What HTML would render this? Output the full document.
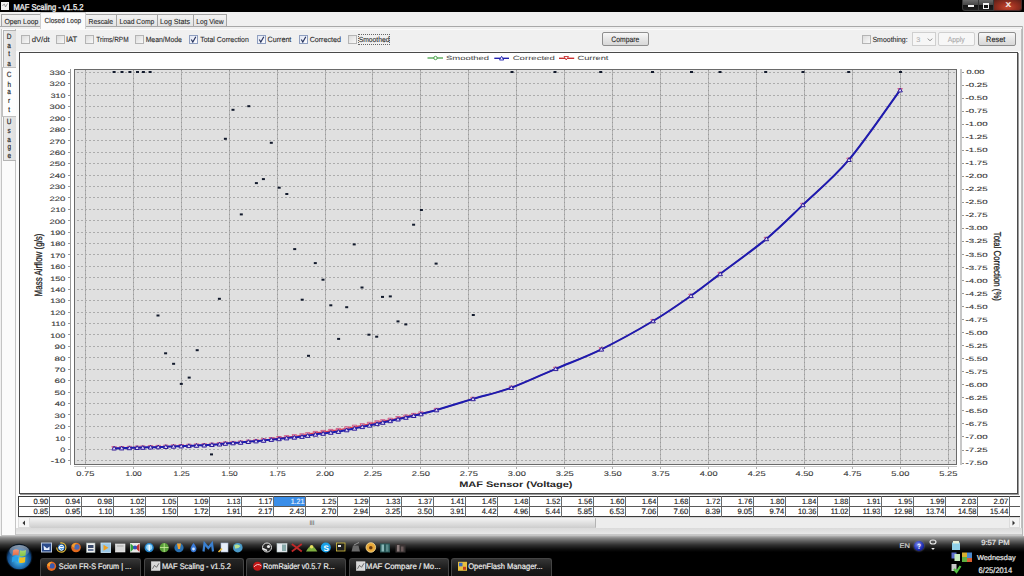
<!DOCTYPE html><html><head><meta charset="utf-8"><style>
*{margin:0;padding:0;box-sizing:border-box}
html,body{width:1024px;height:576px;overflow:hidden;background:#f0f0f0;font-family:"Liberation Sans",sans-serif}
.abs{position:absolute}
svg text{font-family:"Liberation Sans",sans-serif;text-rendering:geometricPrecision}

</style></head><body>
<div class="abs" style="left:0px;top:0px;width:1024px;height:12px;background:#000"></div>
<div class="abs" style="left:1px;top:2px;width:8px;height:7.5px;background:#f4f4f4"></div>
<div class="abs" style="left:962px;top:0px;width:17px;height:11px;background:linear-gradient(#6a6a6a 0,#4a4a4a 45%,#141414 55%,#1e1e1e 100%);border:1px solid #3a3a3a;border-top:0;border-radius:0 0 0 3px"></div>
<div class="abs" style="left:968px;top:5px;width:6px;height:2px;background:#f4f4f4"></div>
<div class="abs" style="left:979px;top:0px;width:15px;height:11px;background:linear-gradient(#6a6a6a 0,#4a4a4a 45%,#141414 55%,#1e1e1e 100%);border:1px solid #3a3a3a;border-top:0;border-left:0"></div>
<div class="abs" style="left:983px;top:3px;width:6px;height:6px;border:1px solid #f4f4f4;border-top-width:2px"></div>
<div class="abs" style="left:994px;top:0px;width:28px;height:11px;background:radial-gradient(ellipse at 50% 70%,#c84a30 0,#9a3020 45%,#5a2018 100%);border:1px solid #4a2a2a;border-top:0;border-left:0;border-radius:0 0 3px 0"></div>
<div class="abs" style="left:0px;top:12px;width:1024px;height:524px;background:#f0f0f0"></div>
<div class="abs" style="left:1px;top:29px;width:1022px;height:507px;border:1px solid #c4c4c4;background:#fbfbfb"></div>
<div class="abs" style="left:1px;top:14px;width:41px;height:13px;background:linear-gradient(#f2f2f2,#e4e4e4);border:1px solid #a4a4a4"></div>
<div class="abs" style="left:85px;top:14px;width:33px;height:13px;background:linear-gradient(#f2f2f2,#e4e4e4);border:1px solid #a4a4a4"></div>
<div class="abs" style="left:116px;top:14px;width:43px;height:13px;background:linear-gradient(#f2f2f2,#e4e4e4);border:1px solid #a4a4a4"></div>
<div class="abs" style="left:157px;top:14px;width:38px;height:13px;background:linear-gradient(#f2f2f2,#e4e4e4);border:1px solid #a4a4a4"></div>
<div class="abs" style="left:193px;top:14px;width:34px;height:13px;background:linear-gradient(#f2f2f2,#e4e4e4);border:1px solid #a4a4a4"></div>
<div class="abs" style="left:0px;top:26px;width:1023px;height:1px;background:#a8a8a8"></div>
<div class="abs" style="left:1022px;top:26px;width:1px;height:510px;background:#b8b8b8"></div>
<div class="abs" style="left:40px;top:12px;width:46px;height:18px;background:#fbfbfb;border:1px solid #cfcfcf;border-bottom:0"></div>
<div class="abs" style="left:2px;top:29px;width:1020px;height:506px;background:#fbfbfb"></div>
<div class="abs" style="left:15px;top:29px;width:1px;height:507px;background:#c4c4c4"></div>
<div class="abs" style="left:3px;top:30px;width:13px;height:38px;background:linear-gradient(90deg,#ececec,#dedede);border:1px solid #b4b4b4;border-right:0"></div>
<div class="abs" style="left:3px;top:116px;width:13px;height:45px;background:linear-gradient(90deg,#ececec,#dedede);border:1px solid #b4b4b4;border-right:0"></div>
<div class="abs" style="left:2px;top:67px;width:14px;height:50px;background:#fdfdfd;border:1px solid #c0c0c0;border-right:0"></div>
<div class="abs" style="left:16px;top:30px;width:1005px;height:21px;background:#f0f0f0"></div>
<div class="abs" style="left:21px;top:35px;width:9px;height:9px;border:1px solid #b4b4b4;background:linear-gradient(135deg,#dcdcdc,#f8f8f8)"></div>
<div class="abs" style="left:56px;top:35px;width:9px;height:9px;border:1px solid #b4b4b4;background:linear-gradient(135deg,#dcdcdc,#f8f8f8)"></div>
<div class="abs" style="left:85px;top:35px;width:9px;height:9px;border:1px solid #b4b4b4;background:linear-gradient(135deg,#dcdcdc,#f8f8f8)"></div>
<div class="abs" style="left:135px;top:35px;width:9px;height:9px;border:1px solid #b4b4b4;background:linear-gradient(135deg,#dcdcdc,#f8f8f8)"></div>
<div class="abs" style="left:189px;top:35px;width:9px;height:9px;border:1px solid #8f9fc0;background:linear-gradient(135deg,#e4e8f4,#fafbfe)"></div>
<div class="abs" style="left:257px;top:35px;width:9px;height:9px;border:1px solid #8f9fc0;background:linear-gradient(135deg,#e4e8f4,#fafbfe)"></div>
<div class="abs" style="left:299px;top:35px;width:9px;height:9px;border:1px solid #8f9fc0;background:linear-gradient(135deg,#e4e8f4,#fafbfe)"></div>
<div class="abs" style="left:348px;top:35px;width:9px;height:9px;border:1px solid #b4b4b4;background:linear-gradient(135deg,#dcdcdc,#f8f8f8)"></div>
<div class="abs" style="left:358px;top:34px;width:32px;height:11px;border:1px dotted #666"></div>
<div class="abs" style="left:602px;top:32px;width:47px;height:14px;border:1px solid #8e8e8e;border-radius:2px;background:linear-gradient(#f8f8f8,#e6e6e6 50%,#d8d8d8)"></div>
<div class="abs" style="left:862px;top:35px;width:9px;height:9px;border:1px solid #b4b4b4;background:linear-gradient(135deg,#dcdcdc,#f8f8f8)"></div>
<div class="abs" style="left:912px;top:32px;width:24px;height:14px;border:1px solid #cfcfcf;background:#f6f6f6"></div>
<div class="abs" style="left:938px;top:32px;width:37px;height:14px;border:1px solid #cfcfcf;background:#f7f7f7;border-radius:2px"></div>
<div class="abs" style="left:978px;top:32px;width:38px;height:14px;border:1px solid #8e8e8e;border-radius:2px;background:linear-gradient(#f8f8f8,#e6e6e6 50%,#d8d8d8)"></div>
<div class="abs" style="left:19px;top:52px;width:999px;height:442px;border:1px solid #4a4a4a;background:#fff;box-shadow:1px 1px 0 #9a9a9a"></div>
<div class="abs" style="left:1021px;top:29px;width:1px;height:507px;background:#c0c0c0"></div>
<svg class="abs" style="left:0;top:0" width="1024" height="576">
<rect x="74.5" y="69.5" width="882" height="395" fill="#e0e0e0" stroke="#6a6a6a" stroke-width="1"/>
<line x1="85.5" y1="70" x2="85.5" y2="464" stroke="#b2b2b2" stroke-width="1"/>
<line x1="85.5" y1="70" x2="85.5" y2="464" stroke="#999" stroke-width="1" stroke-dasharray="1,3"/>
<line x1="133.5" y1="70" x2="133.5" y2="464" stroke="#b2b2b2" stroke-width="1"/>
<line x1="133.5" y1="70" x2="133.5" y2="464" stroke="#999" stroke-width="1" stroke-dasharray="1,3"/>
<line x1="181.5" y1="70" x2="181.5" y2="464" stroke="#b2b2b2" stroke-width="1"/>
<line x1="181.5" y1="70" x2="181.5" y2="464" stroke="#999" stroke-width="1" stroke-dasharray="1,3"/>
<line x1="229.5" y1="70" x2="229.5" y2="464" stroke="#b2b2b2" stroke-width="1"/>
<line x1="229.5" y1="70" x2="229.5" y2="464" stroke="#999" stroke-width="1" stroke-dasharray="1,3"/>
<line x1="277.5" y1="70" x2="277.5" y2="464" stroke="#b2b2b2" stroke-width="1"/>
<line x1="277.5" y1="70" x2="277.5" y2="464" stroke="#999" stroke-width="1" stroke-dasharray="1,3"/>
<line x1="325.5" y1="70" x2="325.5" y2="464" stroke="#b2b2b2" stroke-width="1"/>
<line x1="325.5" y1="70" x2="325.5" y2="464" stroke="#999" stroke-width="1" stroke-dasharray="1,3"/>
<line x1="372.5" y1="70" x2="372.5" y2="464" stroke="#b2b2b2" stroke-width="1"/>
<line x1="372.5" y1="70" x2="372.5" y2="464" stroke="#999" stroke-width="1" stroke-dasharray="1,3"/>
<line x1="420.5" y1="70" x2="420.5" y2="464" stroke="#b2b2b2" stroke-width="1"/>
<line x1="420.5" y1="70" x2="420.5" y2="464" stroke="#999" stroke-width="1" stroke-dasharray="1,3"/>
<line x1="468.5" y1="70" x2="468.5" y2="464" stroke="#b2b2b2" stroke-width="1"/>
<line x1="468.5" y1="70" x2="468.5" y2="464" stroke="#999" stroke-width="1" stroke-dasharray="1,3"/>
<line x1="516.5" y1="70" x2="516.5" y2="464" stroke="#b2b2b2" stroke-width="1"/>
<line x1="516.5" y1="70" x2="516.5" y2="464" stroke="#999" stroke-width="1" stroke-dasharray="1,3"/>
<line x1="564.5" y1="70" x2="564.5" y2="464" stroke="#b2b2b2" stroke-width="1"/>
<line x1="564.5" y1="70" x2="564.5" y2="464" stroke="#999" stroke-width="1" stroke-dasharray="1,3"/>
<line x1="612.5" y1="70" x2="612.5" y2="464" stroke="#b2b2b2" stroke-width="1"/>
<line x1="612.5" y1="70" x2="612.5" y2="464" stroke="#999" stroke-width="1" stroke-dasharray="1,3"/>
<line x1="660.5" y1="70" x2="660.5" y2="464" stroke="#b2b2b2" stroke-width="1"/>
<line x1="660.5" y1="70" x2="660.5" y2="464" stroke="#999" stroke-width="1" stroke-dasharray="1,3"/>
<line x1="708.5" y1="70" x2="708.5" y2="464" stroke="#b2b2b2" stroke-width="1"/>
<line x1="708.5" y1="70" x2="708.5" y2="464" stroke="#999" stroke-width="1" stroke-dasharray="1,3"/>
<line x1="756.5" y1="70" x2="756.5" y2="464" stroke="#b2b2b2" stroke-width="1"/>
<line x1="756.5" y1="70" x2="756.5" y2="464" stroke="#999" stroke-width="1" stroke-dasharray="1,3"/>
<line x1="804.5" y1="70" x2="804.5" y2="464" stroke="#b2b2b2" stroke-width="1"/>
<line x1="804.5" y1="70" x2="804.5" y2="464" stroke="#999" stroke-width="1" stroke-dasharray="1,3"/>
<line x1="852.5" y1="70" x2="852.5" y2="464" stroke="#b2b2b2" stroke-width="1"/>
<line x1="852.5" y1="70" x2="852.5" y2="464" stroke="#999" stroke-width="1" stroke-dasharray="1,3"/>
<line x1="900.5" y1="70" x2="900.5" y2="464" stroke="#b2b2b2" stroke-width="1"/>
<line x1="900.5" y1="70" x2="900.5" y2="464" stroke="#999" stroke-width="1" stroke-dasharray="1,3"/>
<line x1="948.5" y1="70" x2="948.5" y2="464" stroke="#b2b2b2" stroke-width="1"/>
<line x1="948.5" y1="70" x2="948.5" y2="464" stroke="#999" stroke-width="1" stroke-dasharray="1,3"/>
<line x1="75" y1="460.5" x2="956" y2="460.5" stroke="#acacac" stroke-width="1" stroke-dasharray="2,2" stroke-dashoffset="2"/>
<line x1="75" y1="449.5" x2="956" y2="449.5" stroke="#acacac" stroke-width="1" stroke-dasharray="2,2" stroke-dashoffset="2"/>
<line x1="75" y1="437.5" x2="956" y2="437.5" stroke="#acacac" stroke-width="1" stroke-dasharray="2,2" stroke-dashoffset="2"/>
<line x1="75" y1="426.5" x2="956" y2="426.5" stroke="#acacac" stroke-width="1" stroke-dasharray="2,2" stroke-dashoffset="2"/>
<line x1="75" y1="414.5" x2="956" y2="414.5" stroke="#acacac" stroke-width="1" stroke-dasharray="2,2" stroke-dashoffset="2"/>
<line x1="75" y1="403.5" x2="956" y2="403.5" stroke="#acacac" stroke-width="1" stroke-dasharray="2,2" stroke-dashoffset="2"/>
<line x1="75" y1="392.5" x2="956" y2="392.5" stroke="#acacac" stroke-width="1" stroke-dasharray="2,2" stroke-dashoffset="2"/>
<line x1="75" y1="380.5" x2="956" y2="380.5" stroke="#acacac" stroke-width="1" stroke-dasharray="2,2" stroke-dashoffset="2"/>
<line x1="75" y1="369.5" x2="956" y2="369.5" stroke="#acacac" stroke-width="1" stroke-dasharray="2,2" stroke-dashoffset="2"/>
<line x1="75" y1="357.5" x2="956" y2="357.5" stroke="#acacac" stroke-width="1" stroke-dasharray="2,2" stroke-dashoffset="2"/>
<line x1="75" y1="346.5" x2="956" y2="346.5" stroke="#acacac" stroke-width="1" stroke-dasharray="2,2" stroke-dashoffset="2"/>
<line x1="75" y1="334.5" x2="956" y2="334.5" stroke="#acacac" stroke-width="1" stroke-dasharray="2,2" stroke-dashoffset="2"/>
<line x1="75" y1="323.5" x2="956" y2="323.5" stroke="#acacac" stroke-width="1" stroke-dasharray="2,2" stroke-dashoffset="2"/>
<line x1="75" y1="312.5" x2="956" y2="312.5" stroke="#acacac" stroke-width="1" stroke-dasharray="2,2" stroke-dashoffset="2"/>
<line x1="75" y1="300.5" x2="956" y2="300.5" stroke="#acacac" stroke-width="1" stroke-dasharray="2,2" stroke-dashoffset="2"/>
<line x1="75" y1="289.5" x2="956" y2="289.5" stroke="#acacac" stroke-width="1" stroke-dasharray="2,2" stroke-dashoffset="2"/>
<line x1="75" y1="277.5" x2="956" y2="277.5" stroke="#acacac" stroke-width="1" stroke-dasharray="2,2" stroke-dashoffset="2"/>
<line x1="75" y1="266.5" x2="956" y2="266.5" stroke="#acacac" stroke-width="1" stroke-dasharray="2,2" stroke-dashoffset="2"/>
<line x1="75" y1="254.5" x2="956" y2="254.5" stroke="#acacac" stroke-width="1" stroke-dasharray="2,2" stroke-dashoffset="2"/>
<line x1="75" y1="243.5" x2="956" y2="243.5" stroke="#acacac" stroke-width="1" stroke-dasharray="2,2" stroke-dashoffset="2"/>
<line x1="75" y1="232.5" x2="956" y2="232.5" stroke="#acacac" stroke-width="1" stroke-dasharray="2,2" stroke-dashoffset="2"/>
<line x1="75" y1="220.5" x2="956" y2="220.5" stroke="#acacac" stroke-width="1" stroke-dasharray="2,2" stroke-dashoffset="2"/>
<line x1="75" y1="209.5" x2="956" y2="209.5" stroke="#acacac" stroke-width="1" stroke-dasharray="2,2" stroke-dashoffset="2"/>
<line x1="75" y1="197.5" x2="956" y2="197.5" stroke="#acacac" stroke-width="1" stroke-dasharray="2,2" stroke-dashoffset="2"/>
<line x1="75" y1="186.5" x2="956" y2="186.5" stroke="#acacac" stroke-width="1" stroke-dasharray="2,2" stroke-dashoffset="2"/>
<line x1="75" y1="175.5" x2="956" y2="175.5" stroke="#acacac" stroke-width="1" stroke-dasharray="2,2" stroke-dashoffset="2"/>
<line x1="75" y1="163.5" x2="956" y2="163.5" stroke="#acacac" stroke-width="1" stroke-dasharray="2,2" stroke-dashoffset="2"/>
<line x1="75" y1="152.5" x2="956" y2="152.5" stroke="#acacac" stroke-width="1" stroke-dasharray="2,2" stroke-dashoffset="2"/>
<line x1="75" y1="140.5" x2="956" y2="140.5" stroke="#acacac" stroke-width="1" stroke-dasharray="2,2" stroke-dashoffset="2"/>
<line x1="75" y1="129.5" x2="956" y2="129.5" stroke="#acacac" stroke-width="1" stroke-dasharray="2,2" stroke-dashoffset="2"/>
<line x1="75" y1="117.5" x2="956" y2="117.5" stroke="#acacac" stroke-width="1" stroke-dasharray="2,2" stroke-dashoffset="2"/>
<line x1="75" y1="106.5" x2="956" y2="106.5" stroke="#acacac" stroke-width="1" stroke-dasharray="2,2" stroke-dashoffset="2"/>
<line x1="75" y1="95.5" x2="956" y2="95.5" stroke="#acacac" stroke-width="1" stroke-dasharray="2,2" stroke-dashoffset="2"/>
<line x1="75" y1="83.5" x2="956" y2="83.5" stroke="#acacac" stroke-width="1" stroke-dasharray="2,2" stroke-dashoffset="2"/>
<line x1="75" y1="72.5" x2="956" y2="72.5" stroke="#acacac" stroke-width="1" stroke-dasharray="2,2" stroke-dashoffset="2"/>
<line x1="70.5" y1="69" x2="70.5" y2="465" stroke="#999"/>
<line x1="68" y1="460.5" x2="70" y2="460.5" stroke="#999"/>
<line x1="68" y1="449.5" x2="70" y2="449.5" stroke="#999"/>
<line x1="68" y1="437.5" x2="70" y2="437.5" stroke="#999"/>
<line x1="68" y1="426.5" x2="70" y2="426.5" stroke="#999"/>
<line x1="68" y1="414.5" x2="70" y2="414.5" stroke="#999"/>
<line x1="68" y1="403.5" x2="70" y2="403.5" stroke="#999"/>
<line x1="68" y1="392.5" x2="70" y2="392.5" stroke="#999"/>
<line x1="68" y1="380.5" x2="70" y2="380.5" stroke="#999"/>
<line x1="68" y1="369.5" x2="70" y2="369.5" stroke="#999"/>
<line x1="68" y1="357.5" x2="70" y2="357.5" stroke="#999"/>
<line x1="68" y1="346.5" x2="70" y2="346.5" stroke="#999"/>
<line x1="68" y1="334.5" x2="70" y2="334.5" stroke="#999"/>
<line x1="68" y1="323.5" x2="70" y2="323.5" stroke="#999"/>
<line x1="68" y1="312.5" x2="70" y2="312.5" stroke="#999"/>
<line x1="68" y1="300.5" x2="70" y2="300.5" stroke="#999"/>
<line x1="68" y1="289.5" x2="70" y2="289.5" stroke="#999"/>
<line x1="68" y1="277.5" x2="70" y2="277.5" stroke="#999"/>
<line x1="68" y1="266.5" x2="70" y2="266.5" stroke="#999"/>
<line x1="68" y1="254.5" x2="70" y2="254.5" stroke="#999"/>
<line x1="68" y1="243.5" x2="70" y2="243.5" stroke="#999"/>
<line x1="68" y1="232.5" x2="70" y2="232.5" stroke="#999"/>
<line x1="68" y1="220.5" x2="70" y2="220.5" stroke="#999"/>
<line x1="68" y1="209.5" x2="70" y2="209.5" stroke="#999"/>
<line x1="68" y1="197.5" x2="70" y2="197.5" stroke="#999"/>
<line x1="68" y1="186.5" x2="70" y2="186.5" stroke="#999"/>
<line x1="68" y1="175.5" x2="70" y2="175.5" stroke="#999"/>
<line x1="68" y1="163.5" x2="70" y2="163.5" stroke="#999"/>
<line x1="68" y1="152.5" x2="70" y2="152.5" stroke="#999"/>
<line x1="68" y1="140.5" x2="70" y2="140.5" stroke="#999"/>
<line x1="68" y1="129.5" x2="70" y2="129.5" stroke="#999"/>
<line x1="68" y1="117.5" x2="70" y2="117.5" stroke="#999"/>
<line x1="68" y1="106.5" x2="70" y2="106.5" stroke="#999"/>
<line x1="68" y1="95.5" x2="70" y2="95.5" stroke="#999"/>
<line x1="68" y1="83.5" x2="70" y2="83.5" stroke="#999"/>
<line x1="68" y1="72.5" x2="70" y2="72.5" stroke="#999"/>
<line x1="961" y1="69" x2="961" y2="465" stroke="#b4b4b4" stroke-width="1.5"/>
<line x1="962" y1="72.5" x2="964" y2="72.5" stroke="#999"/>
<line x1="962" y1="85.5" x2="964" y2="85.5" stroke="#999"/>
<line x1="962" y1="98.5" x2="964" y2="98.5" stroke="#999"/>
<line x1="962" y1="111.5" x2="964" y2="111.5" stroke="#999"/>
<line x1="962" y1="124.5" x2="964" y2="124.5" stroke="#999"/>
<line x1="962" y1="137.5" x2="964" y2="137.5" stroke="#999"/>
<line x1="962" y1="150.5" x2="964" y2="150.5" stroke="#999"/>
<line x1="962" y1="163.5" x2="964" y2="163.5" stroke="#999"/>
<line x1="962" y1="176.5" x2="964" y2="176.5" stroke="#999"/>
<line x1="962" y1="189.5" x2="964" y2="189.5" stroke="#999"/>
<line x1="962" y1="202.5" x2="964" y2="202.5" stroke="#999"/>
<line x1="962" y1="215.5" x2="964" y2="215.5" stroke="#999"/>
<line x1="962" y1="228.5" x2="964" y2="228.5" stroke="#999"/>
<line x1="962" y1="241.5" x2="964" y2="241.5" stroke="#999"/>
<line x1="962" y1="254.5" x2="964" y2="254.5" stroke="#999"/>
<line x1="962" y1="267.5" x2="964" y2="267.5" stroke="#999"/>
<line x1="962" y1="280.5" x2="964" y2="280.5" stroke="#999"/>
<line x1="962" y1="293.5" x2="964" y2="293.5" stroke="#999"/>
<line x1="962" y1="306.5" x2="964" y2="306.5" stroke="#999"/>
<line x1="962" y1="319.5" x2="964" y2="319.5" stroke="#999"/>
<line x1="962" y1="332.5" x2="964" y2="332.5" stroke="#999"/>
<line x1="962" y1="345.5" x2="964" y2="345.5" stroke="#999"/>
<line x1="962" y1="358.5" x2="964" y2="358.5" stroke="#999"/>
<line x1="962" y1="371.5" x2="964" y2="371.5" stroke="#999"/>
<line x1="962" y1="384.5" x2="964" y2="384.5" stroke="#999"/>
<line x1="962" y1="397.5" x2="964" y2="397.5" stroke="#999"/>
<line x1="962" y1="410.5" x2="964" y2="410.5" stroke="#999"/>
<line x1="962" y1="423.5" x2="964" y2="423.5" stroke="#999"/>
<line x1="962" y1="436.5" x2="964" y2="436.5" stroke="#999"/>
<line x1="962" y1="450.5" x2="964" y2="450.5" stroke="#999"/>
<line x1="962" y1="463.5" x2="964" y2="463.5" stroke="#999"/>
<line x1="74" y1="466.5" x2="957" y2="466.5" stroke="#c8c8c8"/>
<line x1="85.5" y1="467" x2="85.5" y2="469" stroke="#b0b0b0"/>
<line x1="133.5" y1="467" x2="133.5" y2="469" stroke="#b0b0b0"/>
<line x1="181.5" y1="467" x2="181.5" y2="469" stroke="#b0b0b0"/>
<line x1="229.5" y1="467" x2="229.5" y2="469" stroke="#b0b0b0"/>
<line x1="277.5" y1="467" x2="277.5" y2="469" stroke="#b0b0b0"/>
<line x1="325.5" y1="467" x2="325.5" y2="469" stroke="#b0b0b0"/>
<line x1="372.5" y1="467" x2="372.5" y2="469" stroke="#b0b0b0"/>
<line x1="420.5" y1="467" x2="420.5" y2="469" stroke="#b0b0b0"/>
<line x1="468.5" y1="467" x2="468.5" y2="469" stroke="#b0b0b0"/>
<line x1="516.5" y1="467" x2="516.5" y2="469" stroke="#b0b0b0"/>
<line x1="564.5" y1="467" x2="564.5" y2="469" stroke="#b0b0b0"/>
<line x1="612.5" y1="467" x2="612.5" y2="469" stroke="#b0b0b0"/>
<line x1="660.5" y1="467" x2="660.5" y2="469" stroke="#b0b0b0"/>
<line x1="708.5" y1="467" x2="708.5" y2="469" stroke="#b0b0b0"/>
<line x1="756.5" y1="467" x2="756.5" y2="469" stroke="#b0b0b0"/>
<line x1="804.5" y1="467" x2="804.5" y2="469" stroke="#b0b0b0"/>
<line x1="852.5" y1="467" x2="852.5" y2="469" stroke="#b0b0b0"/>
<line x1="900.5" y1="467" x2="900.5" y2="469" stroke="#b0b0b0"/>
<line x1="948.5" y1="467" x2="948.5" y2="469" stroke="#b0b0b0"/>
<line x1="427.5" y1="58" x2="443" y2="58" stroke="#3c9a3c" stroke-width="1.2"/><circle cx="435.5" cy="58" r="1.7" fill="#fff" stroke="#3c9a3c" stroke-width="0.9"/>
<line x1="494.3" y1="58.3" x2="509" y2="58.3" stroke="#2020b0" stroke-width="1.4"/><path d="M499.5,60 L501.6,56.3 L503.7,60 Z" fill="#fff" stroke="#2020b0" stroke-width="0.9"/>
<line x1="559" y1="58.3" x2="574.2" y2="58.3" stroke="#c83030" stroke-width="1.4"/><path d="M564,56.5 L568.5,56.5 L566.2,60 Z" fill="#fff" stroke="#c83030" stroke-width="0.9"/>
<path d="M114.06,448.23 C115.34,448.21 119.18,448.16 121.73,448.11 C124.29,448.07 126.85,448.02 129.40,447.94 C131.96,447.87 134.84,447.73 137.08,447.66 C139.31,447.58 140.59,447.56 142.83,447.49 C145.07,447.42 147.94,447.31 150.50,447.24 C153.06,447.16 155.61,447.10 158.17,447.02 C160.73,446.93 163.28,446.82 165.84,446.72 C168.40,446.62 170.95,446.52 173.51,446.42 C176.07,446.32 178.62,446.21 181.18,446.12 C183.74,446.02 186.29,445.95 188.85,445.84 C191.41,445.74 193.96,445.59 196.52,445.49 C199.08,445.38 201.63,445.33 204.19,445.20 C206.75,445.08 209.30,444.91 211.86,444.73 C214.42,444.56 217.29,444.35 219.53,444.15 C221.77,443.95 223.05,443.73 225.28,443.53 C227.52,443.34 230.40,443.15 232.96,442.99 C235.51,442.82 238.07,442.72 240.63,442.52 C243.18,442.31 245.74,442.00 248.30,441.74 C250.85,441.48 253.41,441.24 255.97,440.98 C258.52,440.71 261.08,440.48 263.64,440.16 C266.19,439.84 268.75,439.40 271.31,439.06 C273.86,438.72 276.42,438.44 278.98,438.12 C281.53,437.81 284.09,437.47 286.65,437.16 C289.20,436.86 291.76,436.59 294.32,436.29 C296.88,436.00 299.75,435.74 301.99,435.40 C304.23,435.06 305.50,434.67 307.74,434.27 C309.98,433.86 312.86,433.34 315.41,432.96 C317.97,432.58 320.53,432.34 323.08,432.01 C325.64,431.68 328.20,431.33 330.75,430.99 C333.31,430.65 335.77,430.41 338.42,429.97 C341.08,429.53 344.02,428.88 346.70,428.36 C349.38,427.83 351.90,427.34 354.50,426.83 C357.10,426.32 359.80,425.79 362.30,425.30 C364.80,424.81 367.05,424.37 369.50,423.89 C371.95,423.40 374.78,422.84 377.00,422.40 C379.22,421.96 380.60,421.69 382.80,421.25 C385.00,420.81 387.67,420.28 390.20,419.77 C392.73,419.27 395.38,418.73 398.00,418.20 C400.62,417.68 403.28,417.13 405.90,416.60 C408.52,416.07 411.20,415.52 413.70,415.00 C416.20,414.48 417.10,414.35 420.90,413.50 C424.70,412.65 427.82,412.34 436.50,409.91 C445.18,407.47 460.52,402.60 473.00,398.90 C485.48,395.20 497.62,392.72 511.40,387.70 C525.18,382.68 540.70,375.20 555.70,368.80 C570.70,362.40 585.17,357.27 601.40,349.30 C617.63,341.33 638.17,329.92 653.10,321.00 C668.03,312.08 679.82,303.65 691.00,295.80 C702.18,287.95 707.63,283.38 720.20,273.90 C732.77,264.42 752.62,250.40 766.40,238.90 C780.18,227.40 789.13,218.10 802.90,204.90 C816.67,191.70 832.80,178.83 849.00,159.70 C865.20,140.57 891.58,101.70 900.10,90.10" fill="none" stroke="#e04050" stroke-width="1.3"/>
<path d="M111.8,446.6 L116.4,446.6 L114.1,450.2 Z" fill="none" stroke="#d05080" stroke-width="0.9"/>
<path d="M119.4,446.5 L124.0,446.5 L121.7,450.1 Z" fill="none" stroke="#d05080" stroke-width="0.9"/>
<path d="M127.1,446.3 L131.7,446.3 L129.4,449.9 Z" fill="none" stroke="#d05080" stroke-width="0.9"/>
<path d="M134.8,446.1 L139.4,446.1 L137.1,449.7 Z" fill="none" stroke="#d05080" stroke-width="0.9"/>
<path d="M140.5,445.9 L145.1,445.9 L142.8,449.5 Z" fill="none" stroke="#d05080" stroke-width="0.9"/>
<path d="M148.2,445.6 L152.8,445.6 L150.5,449.2 Z" fill="none" stroke="#d05080" stroke-width="0.9"/>
<path d="M155.9,445.4 L160.5,445.4 L158.2,449.0 Z" fill="none" stroke="#d05080" stroke-width="0.9"/>
<path d="M163.5,445.1 L168.1,445.1 L165.8,448.7 Z" fill="none" stroke="#d05080" stroke-width="0.9"/>
<path d="M171.2,444.8 L175.8,444.8 L173.5,448.4 Z" fill="none" stroke="#d05080" stroke-width="0.9"/>
<path d="M178.9,444.5 L183.5,444.5 L181.2,448.1 Z" fill="none" stroke="#d05080" stroke-width="0.9"/>
<path d="M186.6,444.2 L191.2,444.2 L188.9,447.8 Z" fill="none" stroke="#d05080" stroke-width="0.9"/>
<path d="M194.2,443.9 L198.8,443.9 L196.5,447.5 Z" fill="none" stroke="#d05080" stroke-width="0.9"/>
<path d="M201.9,443.6 L206.5,443.6 L204.2,447.2 Z" fill="none" stroke="#d05080" stroke-width="0.9"/>
<path d="M209.6,443.1 L214.2,443.1 L211.9,446.7 Z" fill="none" stroke="#d05080" stroke-width="0.9"/>
<path d="M217.2,442.6 L221.8,442.6 L219.5,446.2 Z" fill="none" stroke="#d05080" stroke-width="0.9"/>
<path d="M223.0,441.9 L227.6,441.9 L225.3,445.5 Z" fill="none" stroke="#d05080" stroke-width="0.9"/>
<path d="M230.7,441.4 L235.3,441.4 L233.0,445.0 Z" fill="none" stroke="#d05080" stroke-width="0.9"/>
<path d="M238.3,440.9 L242.9,440.9 L240.6,444.5 Z" fill="none" stroke="#d05080" stroke-width="0.9"/>
<path d="M246.0,440.1 L250.6,440.1 L248.3,443.7 Z" fill="none" stroke="#d05080" stroke-width="0.9"/>
<path d="M253.7,439.4 L258.3,439.4 L256.0,443.0 Z" fill="none" stroke="#d05080" stroke-width="0.9"/>
<path d="M261.3,438.6 L265.9,438.6 L263.6,442.2 Z" fill="none" stroke="#d05080" stroke-width="0.9"/>
<path d="M269.0,437.5 L273.6,437.5 L271.3,441.1 Z" fill="none" stroke="#d05080" stroke-width="0.9"/>
<path d="M276.7,436.5 L281.3,436.5 L279.0,440.1 Z" fill="none" stroke="#d05080" stroke-width="0.9"/>
<path d="M284.3,435.6 L288.9,435.6 L286.6,439.2 Z" fill="none" stroke="#d05080" stroke-width="0.9"/>
<path d="M292.0,434.7 L296.6,434.7 L294.3,438.3 Z" fill="none" stroke="#d05080" stroke-width="0.9"/>
<path d="M299.7,433.8 L304.3,433.8 L302.0,437.4 Z" fill="none" stroke="#d05080" stroke-width="0.9"/>
<path d="M305.4,432.7 L310.0,432.7 L307.7,436.3 Z" fill="none" stroke="#d05080" stroke-width="0.9"/>
<path d="M313.1,431.4 L317.7,431.4 L315.4,435.0 Z" fill="none" stroke="#d05080" stroke-width="0.9"/>
<path d="M320.8,430.4 L325.4,430.4 L323.1,434.0 Z" fill="none" stroke="#d05080" stroke-width="0.9"/>
<path d="M328.5,429.4 L333.1,429.4 L330.8,433.0 Z" fill="none" stroke="#d05080" stroke-width="0.9"/>
<path d="M336.1,428.4 L340.7,428.4 L338.4,432.0 Z" fill="none" stroke="#d05080" stroke-width="0.9"/>
<path d="M344.4,426.8 L349.0,426.8 L346.7,430.4 Z" fill="none" stroke="#d05080" stroke-width="0.9"/>
<path d="M352.2,425.2 L356.8,425.2 L354.5,428.8 Z" fill="none" stroke="#d05080" stroke-width="0.9"/>
<path d="M360.0,423.7 L364.6,423.7 L362.3,427.3 Z" fill="none" stroke="#d05080" stroke-width="0.9"/>
<path d="M367.2,422.3 L371.8,422.3 L369.5,425.9 Z" fill="none" stroke="#d05080" stroke-width="0.9"/>
<path d="M374.7,420.8 L379.3,420.8 L377.0,424.4 Z" fill="none" stroke="#d05080" stroke-width="0.9"/>
<path d="M380.5,419.7 L385.1,419.7 L382.8,423.3 Z" fill="none" stroke="#d05080" stroke-width="0.9"/>
<path d="M387.9,418.2 L392.5,418.2 L390.2,421.8 Z" fill="none" stroke="#d05080" stroke-width="0.9"/>
<path d="M395.7,416.6 L400.3,416.6 L398.0,420.2 Z" fill="none" stroke="#d05080" stroke-width="0.9"/>
<path d="M403.6,415.0 L408.2,415.0 L405.9,418.6 Z" fill="none" stroke="#d05080" stroke-width="0.9"/>
<path d="M411.4,413.4 L416.0,413.4 L413.7,417.0 Z" fill="none" stroke="#d05080" stroke-width="0.9"/>
<path d="M418.6,411.9 L423.2,411.9 L420.9,415.5 Z" fill="none" stroke="#d05080" stroke-width="0.9"/>
<path d="M434.2,408.3 L438.8,408.3 L436.5,411.9 Z" fill="none" stroke="#d05080" stroke-width="0.9"/>
<path d="M470.7,397.3 L475.3,397.3 L473.0,400.9 Z" fill="none" stroke="#d05080" stroke-width="0.9"/>
<path d="M509.1,386.1 L513.7,386.1 L511.4,389.7 Z" fill="none" stroke="#d05080" stroke-width="0.9"/>
<path d="M553.4,367.2 L558.0,367.2 L555.7,370.8 Z" fill="none" stroke="#d05080" stroke-width="0.9"/>
<path d="M599.1,347.7 L603.7,347.7 L601.4,351.3 Z" fill="none" stroke="#d05080" stroke-width="0.9"/>
<path d="M650.8,319.4 L655.4,319.4 L653.1,323.0 Z" fill="none" stroke="#d05080" stroke-width="0.9"/>
<path d="M688.7,294.2 L693.3,294.2 L691.0,297.8 Z" fill="none" stroke="#d05080" stroke-width="0.9"/>
<path d="M717.9,272.3 L722.5,272.3 L720.2,275.9 Z" fill="none" stroke="#d05080" stroke-width="0.9"/>
<path d="M764.1,237.3 L768.7,237.3 L766.4,240.9 Z" fill="none" stroke="#d05080" stroke-width="0.9"/>
<path d="M800.6,203.3 L805.2,203.3 L802.9,206.9 Z" fill="none" stroke="#d05080" stroke-width="0.9"/>
<path d="M846.7,158.1 L851.3,158.1 L849.0,161.7 Z" fill="none" stroke="#d05080" stroke-width="0.9"/>
<path d="M897.8,88.5 L902.4,88.5 L900.1,92.1 Z" fill="none" stroke="#d05080" stroke-width="0.9"/>
<path d="M114.06,448.23 C115.34,448.21 119.18,448.16 121.73,448.11 C124.29,448.07 126.85,448.02 129.40,447.94 C131.96,447.87 134.84,447.73 137.08,447.66 C139.31,447.58 140.59,447.56 142.83,447.49 C145.07,447.42 147.94,447.31 150.50,447.24 C153.06,447.16 155.61,447.10 158.17,447.02 C160.73,446.93 163.28,446.82 165.84,446.72 C168.40,446.62 170.95,446.52 173.51,446.42 C176.07,446.32 178.62,446.21 181.18,446.12 C183.74,446.02 186.29,445.95 188.85,445.84 C191.41,445.74 193.96,445.59 196.52,445.49 C199.08,445.38 201.63,445.33 204.19,445.20 C206.75,445.08 209.30,444.91 211.86,444.73 C214.42,444.56 217.29,444.35 219.53,444.15 C221.77,443.95 223.05,443.73 225.28,443.53 C227.52,443.34 230.40,443.15 232.96,442.99 C235.51,442.82 238.07,442.72 240.63,442.52 C243.18,442.31 245.74,441.97 248.30,441.74 C250.85,441.51 253.41,441.34 255.97,441.13 C258.52,440.93 261.08,440.77 263.64,440.52 C266.19,440.26 268.75,439.89 271.31,439.62 C273.86,439.34 276.42,439.12 278.98,438.86 C281.53,438.60 284.09,438.32 286.65,438.07 C289.20,437.82 291.76,437.61 294.32,437.36 C296.88,437.12 299.75,436.91 301.99,436.61 C304.23,436.31 305.50,435.94 307.74,435.57 C309.98,435.20 312.86,434.72 315.41,434.37 C317.97,434.03 320.53,433.81 323.08,433.50 C325.64,433.20 328.20,432.87 330.75,432.54 C333.31,432.22 335.77,431.99 338.42,431.56 C341.08,431.13 344.02,430.48 346.70,429.96 C349.38,429.43 351.90,428.93 354.50,428.41 C357.10,427.89 359.80,427.35 362.30,426.84 C364.80,426.33 367.05,425.87 369.50,425.36 C371.95,424.85 374.78,424.25 377.00,423.78 C379.22,423.32 380.60,423.02 382.80,422.55 C385.00,422.08 387.67,421.50 390.20,420.95 C392.73,420.39 395.38,419.81 398.00,419.23 C400.62,418.65 403.28,418.05 405.90,417.46 C408.52,416.86 411.20,416.25 413.70,415.67 C416.20,415.10 417.10,414.95 420.90,414.00 C424.70,413.05 427.82,412.52 436.50,410.00 C445.18,407.48 460.52,402.62 473.00,398.90 C485.48,395.18 497.62,392.72 511.40,387.70 C525.18,382.68 540.70,375.20 555.70,368.80 C570.70,362.40 585.17,357.27 601.40,349.30 C617.63,341.33 638.17,329.92 653.10,321.00 C668.03,312.08 679.82,303.65 691.00,295.80 C702.18,287.95 707.63,283.38 720.20,273.90 C732.77,264.42 752.62,250.40 766.40,238.90 C780.18,227.40 789.13,218.10 802.90,204.90 C816.67,191.70 832.80,178.83 849.00,159.70 C865.20,140.57 891.58,101.70 900.10,90.10" fill="none" stroke="#1c1cb0" stroke-width="2"/>
<path d="M111.8,450.0 L116.4,450.0 L114.1,446.2 Z" fill="#e0d8fa" stroke="#30209a" stroke-width="1"/>
<path d="M119.4,449.9 L124.0,449.9 L121.7,446.1 Z" fill="#e0d8fa" stroke="#30209a" stroke-width="1"/>
<path d="M127.1,449.7 L131.7,449.7 L129.4,445.9 Z" fill="#e0d8fa" stroke="#30209a" stroke-width="1"/>
<path d="M134.8,449.5 L139.4,449.5 L137.1,445.7 Z" fill="#e0d8fa" stroke="#30209a" stroke-width="1"/>
<path d="M140.5,449.3 L145.1,449.3 L142.8,445.5 Z" fill="#e0d8fa" stroke="#30209a" stroke-width="1"/>
<path d="M148.2,449.0 L152.8,449.0 L150.5,445.2 Z" fill="#e0d8fa" stroke="#30209a" stroke-width="1"/>
<path d="M155.9,448.8 L160.5,448.8 L158.2,445.0 Z" fill="#e0d8fa" stroke="#30209a" stroke-width="1"/>
<path d="M163.5,448.5 L168.1,448.5 L165.8,444.7 Z" fill="#e0d8fa" stroke="#30209a" stroke-width="1"/>
<path d="M171.2,448.2 L175.8,448.2 L173.5,444.4 Z" fill="#e0d8fa" stroke="#30209a" stroke-width="1"/>
<path d="M178.9,447.9 L183.5,447.9 L181.2,444.1 Z" fill="#e0d8fa" stroke="#30209a" stroke-width="1"/>
<path d="M186.6,447.6 L191.2,447.6 L188.9,443.8 Z" fill="#e0d8fa" stroke="#30209a" stroke-width="1"/>
<path d="M194.2,447.3 L198.8,447.3 L196.5,443.5 Z" fill="#e0d8fa" stroke="#30209a" stroke-width="1"/>
<path d="M201.9,447.0 L206.5,447.0 L204.2,443.2 Z" fill="#e0d8fa" stroke="#30209a" stroke-width="1"/>
<path d="M209.6,446.5 L214.2,446.5 L211.9,442.7 Z" fill="#e0d8fa" stroke="#30209a" stroke-width="1"/>
<path d="M217.2,446.0 L221.8,446.0 L219.5,442.2 Z" fill="#e0d8fa" stroke="#30209a" stroke-width="1"/>
<path d="M223.0,445.3 L227.6,445.3 L225.3,441.5 Z" fill="#e0d8fa" stroke="#30209a" stroke-width="1"/>
<path d="M230.7,444.8 L235.3,444.8 L233.0,441.0 Z" fill="#e0d8fa" stroke="#30209a" stroke-width="1"/>
<path d="M238.3,444.3 L242.9,444.3 L240.6,440.5 Z" fill="#e0d8fa" stroke="#30209a" stroke-width="1"/>
<path d="M246.0,443.5 L250.6,443.5 L248.3,439.7 Z" fill="#e0d8fa" stroke="#30209a" stroke-width="1"/>
<path d="M253.7,442.9 L258.3,442.9 L256.0,439.1 Z" fill="#e0d8fa" stroke="#30209a" stroke-width="1"/>
<path d="M261.3,442.3 L265.9,442.3 L263.6,438.5 Z" fill="#e0d8fa" stroke="#30209a" stroke-width="1"/>
<path d="M269.0,441.4 L273.6,441.4 L271.3,437.6 Z" fill="#e0d8fa" stroke="#30209a" stroke-width="1"/>
<path d="M276.7,440.7 L281.3,440.7 L279.0,436.9 Z" fill="#e0d8fa" stroke="#30209a" stroke-width="1"/>
<path d="M284.3,439.9 L288.9,439.9 L286.6,436.1 Z" fill="#e0d8fa" stroke="#30209a" stroke-width="1"/>
<path d="M292.0,439.2 L296.6,439.2 L294.3,435.4 Z" fill="#e0d8fa" stroke="#30209a" stroke-width="1"/>
<path d="M299.7,438.4 L304.3,438.4 L302.0,434.6 Z" fill="#e0d8fa" stroke="#30209a" stroke-width="1"/>
<path d="M305.4,437.4 L310.0,437.4 L307.7,433.6 Z" fill="#e0d8fa" stroke="#30209a" stroke-width="1"/>
<path d="M313.1,436.2 L317.7,436.2 L315.4,432.4 Z" fill="#e0d8fa" stroke="#30209a" stroke-width="1"/>
<path d="M320.8,435.3 L325.4,435.3 L323.1,431.5 Z" fill="#e0d8fa" stroke="#30209a" stroke-width="1"/>
<path d="M328.5,434.3 L333.1,434.3 L330.8,430.5 Z" fill="#e0d8fa" stroke="#30209a" stroke-width="1"/>
<path d="M336.1,433.4 L340.7,433.4 L338.4,429.6 Z" fill="#e0d8fa" stroke="#30209a" stroke-width="1"/>
<path d="M344.4,431.8 L349.0,431.8 L346.7,428.0 Z" fill="#e0d8fa" stroke="#30209a" stroke-width="1"/>
<path d="M352.2,430.2 L356.8,430.2 L354.5,426.4 Z" fill="#e0d8fa" stroke="#30209a" stroke-width="1"/>
<path d="M360.0,428.6 L364.6,428.6 L362.3,424.8 Z" fill="#e0d8fa" stroke="#30209a" stroke-width="1"/>
<path d="M367.2,427.2 L371.8,427.2 L369.5,423.4 Z" fill="#e0d8fa" stroke="#30209a" stroke-width="1"/>
<path d="M374.7,425.6 L379.3,425.6 L377.0,421.8 Z" fill="#e0d8fa" stroke="#30209a" stroke-width="1"/>
<path d="M380.5,424.3 L385.1,424.3 L382.8,420.5 Z" fill="#e0d8fa" stroke="#30209a" stroke-width="1"/>
<path d="M387.9,422.7 L392.5,422.7 L390.2,418.9 Z" fill="#e0d8fa" stroke="#30209a" stroke-width="1"/>
<path d="M395.7,421.0 L400.3,421.0 L398.0,417.2 Z" fill="#e0d8fa" stroke="#30209a" stroke-width="1"/>
<path d="M403.6,419.3 L408.2,419.3 L405.9,415.5 Z" fill="#e0d8fa" stroke="#30209a" stroke-width="1"/>
<path d="M411.4,417.5 L416.0,417.5 L413.7,413.7 Z" fill="#e0d8fa" stroke="#30209a" stroke-width="1"/>
<path d="M418.6,415.8 L423.2,415.8 L420.9,412.0 Z" fill="#e0d8fa" stroke="#30209a" stroke-width="1"/>
<path d="M434.2,411.8 L438.8,411.8 L436.5,408.0 Z" fill="#e0d8fa" stroke="#30209a" stroke-width="1"/>
<path d="M470.7,400.7 L475.3,400.7 L473.0,396.9 Z" fill="#e0d8fa" stroke="#30209a" stroke-width="1"/>
<path d="M509.1,389.5 L513.7,389.5 L511.4,385.7 Z" fill="#e0d8fa" stroke="#30209a" stroke-width="1"/>
<path d="M553.4,370.6 L558.0,370.6 L555.7,366.8 Z" fill="#e0d8fa" stroke="#30209a" stroke-width="1"/>
<path d="M599.1,351.1 L603.7,351.1 L601.4,347.3 Z" fill="#e0d8fa" stroke="#30209a" stroke-width="1"/>
<path d="M650.8,322.8 L655.4,322.8 L653.1,319.0 Z" fill="#e0d8fa" stroke="#30209a" stroke-width="1"/>
<path d="M688.7,297.6 L693.3,297.6 L691.0,293.8 Z" fill="#e0d8fa" stroke="#30209a" stroke-width="1"/>
<path d="M717.9,275.7 L722.5,275.7 L720.2,271.9 Z" fill="#e0d8fa" stroke="#30209a" stroke-width="1"/>
<path d="M764.1,240.7 L768.7,240.7 L766.4,236.9 Z" fill="#e0d8fa" stroke="#30209a" stroke-width="1"/>
<path d="M800.6,206.7 L805.2,206.7 L802.9,202.9 Z" fill="#e0d8fa" stroke="#30209a" stroke-width="1"/>
<path d="M846.7,161.5 L851.3,161.5 L849.0,157.7 Z" fill="#e0d8fa" stroke="#30209a" stroke-width="1"/>
<path d="M897.8,91.9 L902.4,91.9 L900.1,88.1 Z" fill="#e0d8fa" stroke="#30209a" stroke-width="1"/>
<rect x="231.5" y="108.8" width="3" height="2" fill="#121a2c"/>
<rect x="247.3" y="105.2" width="3" height="2" fill="#121a2c"/>
<rect x="223.9" y="137.8" width="3" height="2" fill="#121a2c"/>
<rect x="269.8" y="141.8" width="3" height="2" fill="#121a2c"/>
<rect x="261.9" y="178.1" width="3" height="2" fill="#121a2c"/>
<rect x="254.9" y="182.1" width="3" height="2" fill="#121a2c"/>
<rect x="277.7" y="186.7" width="3" height="2" fill="#121a2c"/>
<rect x="285.3" y="193.0" width="3" height="2" fill="#121a2c"/>
<rect x="239.8" y="213.4" width="3" height="2" fill="#121a2c"/>
<rect x="293.2" y="248.1" width="3" height="2" fill="#121a2c"/>
<rect x="217.9" y="297.8" width="3" height="2" fill="#121a2c"/>
<rect x="156.5" y="314.5" width="3" height="2" fill="#121a2c"/>
<rect x="164.1" y="352.3" width="3" height="2" fill="#121a2c"/>
<rect x="172.1" y="362.8" width="3" height="2" fill="#121a2c"/>
<rect x="195.7" y="349.2" width="3" height="2" fill="#121a2c"/>
<rect x="187.7" y="376.6" width="3" height="2" fill="#121a2c"/>
<rect x="179.8" y="382.9" width="3" height="2" fill="#121a2c"/>
<rect x="210.0" y="453.4" width="3" height="2" fill="#121a2c"/>
<rect x="313.8" y="262.1" width="3" height="2" fill="#121a2c"/>
<rect x="321.5" y="278.7" width="3" height="2" fill="#121a2c"/>
<rect x="300.7" y="298.7" width="3" height="2" fill="#121a2c"/>
<rect x="329.3" y="304.3" width="3" height="2" fill="#121a2c"/>
<rect x="337.1" y="337.9" width="3" height="2" fill="#121a2c"/>
<rect x="345.2" y="306.2" width="3" height="2" fill="#121a2c"/>
<rect x="352.7" y="243.4" width="3" height="2" fill="#121a2c"/>
<rect x="360.5" y="286.5" width="3" height="2" fill="#121a2c"/>
<rect x="367.4" y="333.7" width="3" height="2" fill="#121a2c"/>
<rect x="375.2" y="335.7" width="3" height="2" fill="#121a2c"/>
<rect x="381.0" y="295.9" width="3" height="2" fill="#121a2c"/>
<rect x="388.8" y="295.4" width="3" height="2" fill="#121a2c"/>
<rect x="396.5" y="320.4" width="3" height="2" fill="#121a2c"/>
<rect x="404.3" y="323.4" width="3" height="2" fill="#121a2c"/>
<rect x="412.1" y="223.7" width="3" height="2" fill="#121a2c"/>
<rect x="419.9" y="209.0" width="3" height="2" fill="#121a2c"/>
<rect x="434.6" y="262.6" width="3" height="2" fill="#121a2c"/>
<rect x="471.8" y="314.0" width="3" height="2" fill="#121a2c"/>
<rect x="307.0" y="354.8" width="3" height="2" fill="#121a2c"/>
<rect x="112.6" y="71.0" width="3" height="2" fill="#121a2c"/>
<rect x="120.5" y="71.0" width="3" height="2" fill="#121a2c"/>
<rect x="128.4" y="71.0" width="3" height="2" fill="#121a2c"/>
<rect x="136.0" y="71.0" width="3" height="2" fill="#121a2c"/>
<rect x="141.9" y="71.0" width="3" height="2" fill="#121a2c"/>
<rect x="148.6" y="71.0" width="3" height="2" fill="#121a2c"/>
<rect x="510.5" y="71.0" width="3" height="2" fill="#121a2c"/>
<rect x="553.5" y="71.0" width="3" height="2" fill="#121a2c"/>
<rect x="599.2" y="71.0" width="3" height="2" fill="#121a2c"/>
<rect x="651.0" y="71.0" width="3" height="2" fill="#121a2c"/>
<rect x="690.0" y="71.0" width="3" height="2" fill="#121a2c"/>
<rect x="718.5" y="71.0" width="3" height="2" fill="#121a2c"/>
<rect x="764.2" y="71.0" width="3" height="2" fill="#121a2c"/>
<rect x="801.5" y="71.0" width="3" height="2" fill="#121a2c"/>
<rect x="847.2" y="71.0" width="3" height="2" fill="#121a2c"/>
<rect x="899.0" y="71.0" width="3" height="2" fill="#121a2c"/>
</svg>
<div class="abs" style="left:18px;top:496px;width:1002px;height:21px;background:#fff;border-top:1px solid #3a3a3a;border-bottom:1px solid #3a3a3a;border-left:1px solid #3a3a3a"></div>
<div class="abs" style="left:18px;top:506px;width:1002px;height:1px;background:#5a5a5a"></div>
<div class="abs" style="left:49px;top:496px;width:1px;height:21px;background:#6a6a6a"></div>
<div class="abs" style="left:81px;top:496px;width:1px;height:21px;background:#6a6a6a"></div>
<div class="abs" style="left:113px;top:496px;width:1px;height:21px;background:#6a6a6a"></div>
<div class="abs" style="left:145px;top:496px;width:1px;height:21px;background:#6a6a6a"></div>
<div class="abs" style="left:177px;top:496px;width:1px;height:21px;background:#6a6a6a"></div>
<div class="abs" style="left:209px;top:496px;width:1px;height:21px;background:#6a6a6a"></div>
<div class="abs" style="left:241px;top:496px;width:1px;height:21px;background:#6a6a6a"></div>
<div class="abs" style="left:273px;top:496px;width:1px;height:21px;background:#6a6a6a"></div>
<div class="abs" style="left:305px;top:496px;width:1px;height:21px;background:#6a6a6a"></div>
<div class="abs" style="left:337px;top:496px;width:1px;height:21px;background:#6a6a6a"></div>
<div class="abs" style="left:369px;top:496px;width:1px;height:21px;background:#6a6a6a"></div>
<div class="abs" style="left:401px;top:496px;width:1px;height:21px;background:#6a6a6a"></div>
<div class="abs" style="left:433px;top:496px;width:1px;height:21px;background:#6a6a6a"></div>
<div class="abs" style="left:465px;top:496px;width:1px;height:21px;background:#6a6a6a"></div>
<div class="abs" style="left:497px;top:496px;width:1px;height:21px;background:#6a6a6a"></div>
<div class="abs" style="left:529px;top:496px;width:1px;height:21px;background:#6a6a6a"></div>
<div class="abs" style="left:561px;top:496px;width:1px;height:21px;background:#6a6a6a"></div>
<div class="abs" style="left:593px;top:496px;width:1px;height:21px;background:#6a6a6a"></div>
<div class="abs" style="left:625px;top:496px;width:1px;height:21px;background:#6a6a6a"></div>
<div class="abs" style="left:657px;top:496px;width:1px;height:21px;background:#6a6a6a"></div>
<div class="abs" style="left:689px;top:496px;width:1px;height:21px;background:#6a6a6a"></div>
<div class="abs" style="left:721px;top:496px;width:1px;height:21px;background:#6a6a6a"></div>
<div class="abs" style="left:753px;top:496px;width:1px;height:21px;background:#6a6a6a"></div>
<div class="abs" style="left:785px;top:496px;width:1px;height:21px;background:#6a6a6a"></div>
<div class="abs" style="left:817px;top:496px;width:1px;height:21px;background:#6a6a6a"></div>
<div class="abs" style="left:849px;top:496px;width:1px;height:21px;background:#6a6a6a"></div>
<div class="abs" style="left:881px;top:496px;width:1px;height:21px;background:#6a6a6a"></div>
<div class="abs" style="left:913px;top:496px;width:1px;height:21px;background:#6a6a6a"></div>
<div class="abs" style="left:945px;top:496px;width:1px;height:21px;background:#6a6a6a"></div>
<div class="abs" style="left:977px;top:496px;width:1px;height:21px;background:#6a6a6a"></div>
<div class="abs" style="left:1009px;top:496px;width:1px;height:21px;background:#6a6a6a"></div>
<div class="abs" style="left:274px;top:497px;width:31px;height:9px;background:#3a8ee8"></div>
<div class="abs" style="left:16px;top:528px;width:1006px;height:7px;background:linear-gradient(#dadada,#e8e8e8);border-bottom:1px solid #c8c8c8"></div>
<div class="abs" style="left:18px;top:517px;width:1002px;height:11px;background:#ededed;border-top:1px solid #d4d4d4"></div>
<div class="abs" style="left:18px;top:517px;width:12px;height:11px;background:#f6f6f6;border:1px solid #dcdcdc"></div>
<div class="abs" style="left:1009px;top:517px;width:11px;height:11px;background:#f4f4f4;border:1px solid #dcdcdc"></div>
<div class="abs" style="left:30px;top:518px;width:566px;height:10px;background:linear-gradient(#f4f4f4,#e2e2e2 45%,#cdcdcd);border-right:1px solid #b4b4b4;border-radius:1px"></div>
<div class="abs" style="left:0px;top:536px;width:1024px;height:40px;background:linear-gradient(#b4b4b4 0px,#8a8a8a 2px,#606060 5px,#303030 9px,#101010 13px,#000 16px,#000 40px)"></div>
<svg class="abs" style="left:0;top:0" width="1024" height="576"><defs>
<radialGradient id="orb" cx="50%" cy="62%" r="55%"><stop offset="0" stop-color="#58d0f8"/><stop offset="0.45" stop-color="#2a88c8"/><stop offset="0.85" stop-color="#124a88"/><stop offset="1" stop-color="#0a2a50"/></radialGradient>
<linearGradient id="gloss" x1="0" y1="0" x2="0" y2="1"><stop offset="0" stop-color="#fff" stop-opacity="0.55"/><stop offset="1" stop-color="#fff" stop-opacity="0.05"/></linearGradient></defs>
<circle cx="19.2" cy="557" r="13.2" fill="#081420"/>
<circle cx="19.2" cy="557" r="12.2" fill="url(#orb)"/>
<path d="M13,550.5 Q15.5,548.5 19,550 L18.5,555.5 Q15.5,554 12.5,556 Z" fill="#e8582a"/>
<path d="M20,550.3 Q23,551.5 26,550 L25.5,555.5 Q22.5,557 19.5,555.8 Z" fill="#7ac030"/>
<path d="M12.3,557 Q15.5,555 18.4,556.6 L18,562 Q15,560.5 11.8,562.5 Z" fill="#2aa0e8"/>
<path d="M19.4,556.9 Q22.5,558.3 25.4,556.8 L25,562.3 Q22,563.8 19,562.4 Z" fill="#f0c020"/>
<ellipse cx="19.2" cy="551" rx="10" ry="6" fill="url(#gloss)"/>
</svg>
<svg class="abs" style="left:0;top:0" width="1024" height="576"><rect x="41.5" y="543" width="10" height="9" fill="#2a4a8a" stroke="#b8c8e0" stroke-width="1"/><path d="M43.5,545.5 L47,548.5 L49.5,546.5 L49.5,550 L44,550 Z" fill="#e8f0ff"/><circle cx="61.3" cy="547.5" r="4.6" fill="none" stroke="#e8c040" stroke-width="1.2" stroke-dasharray="14,6"/><circle cx="61.3" cy="547.5" r="3.3" fill="#3a8ad8"/><rect x="59" y="547" width="4.8" height="1.2" fill="#fff"/><path d="M63.6,546.6 A2.4,2.4 0 1 0 63.4,549.2" fill="none" stroke="#fff" stroke-width="1"/><circle cx="76" cy="547.5" r="4.8" fill="#e46a1e"/><circle cx="76.8" cy="547" r="2.8" fill="#4a6ab8"/><path d="M71.5,546 Q73,542.5 77,543 Q74,544.5 74.5,548 Z" fill="#f0a030"/><rect x="86.5" y="543" width="8.5" height="9.5" fill="#f0f0f0" stroke="#9aa" stroke-width="0.6"/><rect x="88" y="545" width="5.5" height="3" fill="#3a4a6a"/><rect x="88" y="549" width="5.5" height="2" fill="#6a7a9a"/><rect x="101" y="543" width="9.6" height="9.6" fill="#9ac8e8" stroke="#d0e8f8" stroke-width="0.8"/><path d="M103.5,544.8 L108.5,547.8 L103.5,550.8 Z" fill="#f0a020"/><rect x="115.5" y="544" width="9.5" height="8" fill="#d8d8d8" stroke="#f0f0f0" stroke-width="0.6"/><rect x="117" y="545.5" width="6.5" height="1" fill="#aaa"/><rect x="130" y="543" width="10" height="9.5" fill="#e8e8e8"/><path d="M130.5,543.5 L135,547.5 L130.5,552 Z" fill="#30a040"/><path d="M139.5,543.5 L135,547.5 L139.5,552 Z" fill="#c03030"/><circle cx="135" cy="547.5" r="2" fill="#3050c0"/><circle cx="149.2" cy="547.7" r="4.6" fill="#2a8ad0"/><circle cx="149.2" cy="547.2" r="3" fill="#9ad8f8"/><rect x="148.6" y="545" width="1.2" height="6" fill="#fff"/><circle cx="164.2" cy="547.7" r="4.6" fill="#5aa03a"/><path d="M160,547.5 L168.5,547.5 M164.2,543.3 L164.2,552" stroke="#d0f0a0" stroke-width="0.8"/><circle cx="179" cy="547.7" r="4.6" fill="#2a70b0"/><path d="M177,543.5 L181,543.5 L180,549 L178,549 Z" fill="#f0a030"/><path d="M193.5,543 Q198,548 195.5,551.5 Q193.5,553 191.5,551.5 Q189,548 193.5,543 Z" fill="#3a7ad8"/><circle cx="193.5" cy="549" r="1.4" fill="#cfe4ff"/><path d="M203.5,551.5 L204.5,543.5 L208.3,548 L212,543.5 L213,551.5" fill="none" stroke="#3a80d0" stroke-width="2.2"/><rect x="221" y="543" width="7" height="9" fill="#e8eef8" stroke="#a8b8d8" stroke-width="0.6"/><path d="M218.5,552 L222,548.5" stroke="#f0c040" stroke-width="1.6"/><circle cx="237.8" cy="547.7" r="4.8" fill="#4a9ac8"/><path d="M234.5,545 Q238,543.5 240.5,546 Q238.5,549 235,548.5 Z" fill="#b8e090"/><circle cx="267" cy="547.5" r="4.5" fill="#2a2a2a" stroke="#e0e0e0" stroke-width="1"/><circle cx="268.5" cy="546.5" r="1.6" fill="#e8e8e8"/><path d="M262.5,548.5 L267,550.5" stroke="#e8e8e8" stroke-width="1.4"/><rect x="277" y="543.5" width="10" height="8.5" fill="#e8ecf0" stroke="#bcc" stroke-width="0.6"/><rect x="282" y="544.5" width="4" height="6.5" fill="#8aa"/><path d="M291.8,544 L301.8,551.5 M301.8,544 L291.8,551.5" stroke="#c02828" stroke-width="1.8"/><path d="M306,551.5 Q311.5,541 317.3,551.5 Z" fill="#80b040"/><circle cx="311.6" cy="546.8" r="1.8" fill="#e8e060"/><circle cx="325.8" cy="547.5" r="5" fill="#1aa0e8"/><text x="323.4" y="550.6" font-size="8" font-weight="bold" fill="#fff" font-family="Liberation Sans">S</text><rect x="336.5" y="543" width="8.5" height="8" fill="#202020" stroke="#d8c040" stroke-width="0.8"/><rect x="338" y="545" width="3" height="2" fill="#e8e8e8"/><path d="M351.5,551.5 L360,551.5 L358.5,545.5 L353,545.5 Z" fill="#6a6a6a"/><path d="M354,545 L359,542.5" stroke="#aaa" stroke-width="0.8"/><circle cx="370.8" cy="547.5" r="4.8" fill="#e8a838" stroke="#f8e0a0" stroke-width="0.8"/><circle cx="370.8" cy="547.8" r="1.8" fill="#6a3a10"/><rect x="380" y="543.5" width="10" height="9" fill="#2a5a5a"/><rect x="381.5" y="544.5" width="2.5" height="7" fill="#8ab8b8"/><rect x="386" y="544.5" width="2.5" height="7" fill="#5a8a8a"/><rect x="395.5" y="544" width="10" height="8.5" fill="#3a3434"/><rect x="397" y="545" width="2.5" height="6.5" fill="#8a7a7a"/><rect x="401" y="546.5" width="2.5" height="5" fill="#6a5a5a"/></svg>
<div class="abs" style="left:40px;top:558px;width:101px;height:18px;border:1px solid #444;border-bottom:0;border-radius:3px 3px 0 0;background:linear-gradient(#363636,#1a1a1a 60%,#141414)"></div>
<div class="abs" style="left:144px;top:558px;width:100px;height:18px;border:1px solid #444;border-bottom:0;border-radius:3px 3px 0 0;background:linear-gradient(#262626,#0e0e0e)"></div>
<div class="abs" style="left:246px;top:558px;width:100px;height:18px;border:1px solid #444;border-bottom:0;border-radius:3px 3px 0 0;background:linear-gradient(#363636,#1a1a1a 60%,#141414)"></div>
<div class="abs" style="left:349px;top:558px;width:100px;height:18px;border:1px solid #444;border-bottom:0;border-radius:3px 3px 0 0;background:linear-gradient(#363636,#1a1a1a 60%,#141414)"></div>
<div class="abs" style="left:451px;top:558px;width:101px;height:18px;border:1px solid #444;border-bottom:0;border-radius:3px 3px 0 0;background:linear-gradient(#363636,#1a1a1a 60%,#141414)"></div>
<svg class="abs" style="left:0;top:0" width="1024" height="576"><circle cx="51.5" cy="566.3" r="4.6" fill="#e8661e"/><circle cx="52.1" cy="565.9" r="2.6" fill="#3a5ab0"/><path d="M47.0,565.3 Q48.5,561.5 52.5,561.8 Q49.5,563.3 50.0,566.8 Z" fill="#f4a030"/><rect x="151.5" y="561.8" width="8.5" height="8.5" fill="#d8d8d8" stroke="#f0f0f0" stroke-width="0.6"/><path d="M152.5,568.8 L154.5,565.3 L156.5,567.3 L159.0,563.3" stroke="#606060" stroke-width="0.9" fill="none"/><circle cx="257.5" cy="566.3" r="4.5" fill="#c01818"/><path d="M254.0,566.8 Q257.5,562.8 261.3,565.8" stroke="#f8d0d0" stroke-width="1" fill="none"/><rect x="356.5" y="561.8" width="8.5" height="8.5" fill="#d8d8d8" stroke="#f0f0f0" stroke-width="0.6"/><path d="M357.5,568.8 L359.5,565.3 L361.5,567.3 L364.0,563.3" stroke="#606060" stroke-width="0.9" fill="none"/><rect x="458.0" y="561.8" width="9" height="9" fill="#e8c040"/><rect x="459.0" y="562.8" width="3.5" height="3.5" fill="#3a6ac0"/><rect x="463.0" y="566.8" width="3" height="3" fill="#c04020"/></svg>
<div class="abs" style="left:914px;top:541px;width:10px;height:10px;border-radius:50%;background:radial-gradient(circle at 40% 35%,#7a8af0,#1a2ab0 60%,#0a1060);box-shadow:0 0 2px #88a"></div>
<svg class="abs" style="left:0;top:0" width="1024" height="576">
<ellipse cx="933" cy="542" rx="3" ry="2" fill="none" stroke="#e8e8e8" stroke-width="1.1"/>
<path d="M931.2,548 L934.8,548 L933,550 Z" fill="#eee"/>
<rect x="952" y="542.5" width="8" height="7.5" fill="#90d0e8"/><rect x="953" y="541" width="6" height="2.5" fill="#e8f0d8"/>
<rect x="951.5" y="552.5" width="5" height="6" fill="#5a6ac8"/><rect x="954.5" y="554" width="5.5" height="7" fill="#c8e8c0"/>
<rect x="962" y="552.5" width="5" height="9.5" fill="#d8b030"/><rect x="962" y="557" width="5" height="5" fill="#60b040"/><rect x="967" y="552.5" width="5" height="9.5" fill="#4a8ad0"/><rect x="967" y="558" width="5" height="4" fill="#d86030"/>
<rect x="951.5" y="564" width="5" height="7" fill="#c8c8c8"/><path d="M954,569 L956.5,572 L960.5,566" stroke="#50c040" stroke-width="2.2" fill="none"/>
</svg>
<svg class="abs" style="left:0;top:0" width="1024" height="576"><path d="M2.3,5.5 L4.5,4.2 L5.5,7 L7.5,3.5" stroke="#8a8a8a" stroke-width="0.9" fill="none"/>
<text x="13.40" y="9.60" font-size="8.55" textLength="69.99" lengthAdjust="spacingAndGlyphs" fill="#f2f2f2" stroke="#f2f2f2" stroke-width="0.3">MAF Scaling - v1.5.2</text>
<text x="1005.40" y="7.40" font-size="9.06" textLength="5.66" lengthAdjust="spacingAndGlyphs" fill="#f4e8e0" stroke="#f4e8e0" stroke-width="0.1" font-weight="bold">x</text>
<text x="4.39" y="23.80" font-size="7.43" textLength="33.98" lengthAdjust="spacingAndGlyphs" fill="#2a2a2a" stroke="#2a2a2a" stroke-width="0.1">Open Loop</text>
<text x="88.56" y="23.80" font-size="7.17" textLength="24.57" lengthAdjust="spacingAndGlyphs" fill="#2a2a2a" stroke="#2a2a2a" stroke-width="0.1">Rescale</text>
<text x="119.46" y="23.80" font-size="7.17" textLength="34.81" lengthAdjust="spacingAndGlyphs" fill="#2a2a2a" stroke="#2a2a2a" stroke-width="0.1">Load Comp</text>
<text x="160.03" y="23.80" font-size="7.43" textLength="29.92" lengthAdjust="spacingAndGlyphs" fill="#2a2a2a" stroke="#2a2a2a" stroke-width="0.1">Log Stats</text>
<text x="196.26" y="23.80" font-size="7.17" textLength="27.41" lengthAdjust="spacingAndGlyphs" fill="#2a2a2a" stroke="#2a2a2a" stroke-width="0.1">Log View</text>
<text x="44.57" y="22.50" font-size="7.31" textLength="36.59" lengthAdjust="spacingAndGlyphs" fill="#2a2a2a" stroke="#2a2a2a" stroke-width="0.1">Closed Loop</text>
<text x="6.76" y="38.80" font-size="7.60" textLength="4.67" lengthAdjust="spacingAndGlyphs" fill="#2a2a2a" stroke="#2a2a2a" stroke-width="0.2">D</text>
<text x="7.28" y="47.90" font-size="7.60" textLength="3.59" lengthAdjust="spacingAndGlyphs" fill="#2a2a2a" stroke="#2a2a2a" stroke-width="0.2">a</text>
<text x="8.28" y="56.40" font-size="7.60" textLength="1.79" lengthAdjust="spacingAndGlyphs" fill="#2a2a2a" stroke="#2a2a2a" stroke-width="0.2">t</text>
<text x="7.28" y="65.50" font-size="7.60" textLength="3.59" lengthAdjust="spacingAndGlyphs" fill="#2a2a2a" stroke="#2a2a2a" stroke-width="0.2">a</text>
<text x="6.83" y="77.00" font-size="7.60" textLength="4.67" lengthAdjust="spacingAndGlyphs" fill="#2a2a2a" stroke="#2a2a2a" stroke-width="0.2">C</text>
<text x="7.39" y="86.75" font-size="7.60" textLength="3.59" lengthAdjust="spacingAndGlyphs" fill="#2a2a2a" stroke="#2a2a2a" stroke-width="0.2">h</text>
<text x="7.28" y="94.40" font-size="7.60" textLength="3.59" lengthAdjust="spacingAndGlyphs" fill="#2a2a2a" stroke="#2a2a2a" stroke-width="0.2">a</text>
<text x="7.97" y="102.60" font-size="7.60" textLength="2.15" lengthAdjust="spacingAndGlyphs" fill="#2a2a2a" stroke="#2a2a2a" stroke-width="0.2">r</text>
<text x="8.28" y="111.50" font-size="7.60" textLength="1.79" lengthAdjust="spacingAndGlyphs" fill="#2a2a2a" stroke="#2a2a2a" stroke-width="0.2">t</text>
<text x="6.87" y="124.00" font-size="7.60" textLength="4.67" lengthAdjust="spacingAndGlyphs" fill="#2a2a2a" stroke="#2a2a2a" stroke-width="0.2">U</text>
<text x="7.60" y="133.20" font-size="7.60" textLength="3.23" lengthAdjust="spacingAndGlyphs" fill="#2a2a2a" stroke="#2a2a2a" stroke-width="0.2">s</text>
<text x="7.28" y="142.20" font-size="7.60" textLength="3.59" lengthAdjust="spacingAndGlyphs" fill="#2a2a2a" stroke="#2a2a2a" stroke-width="0.2">a</text>
<text x="7.49" y="148.50" font-size="7.60" textLength="3.59" lengthAdjust="spacingAndGlyphs" fill="#2a2a2a" stroke="#2a2a2a" stroke-width="0.2">g</text>
<text x="7.42" y="158.00" font-size="7.60" textLength="3.59" lengthAdjust="spacingAndGlyphs" fill="#2a2a2a" stroke="#2a2a2a" stroke-width="0.2">e</text>
<text x="31.69" y="41.80" font-size="7.45" textLength="17.99" lengthAdjust="spacingAndGlyphs" fill="#2a2a2a" stroke="#2a2a2a" stroke-width="0.1">dV/dt</text>
<text x="65.91" y="41.80" font-size="7.83" textLength="11.35" lengthAdjust="spacingAndGlyphs" fill="#2a2a2a" stroke="#2a2a2a" stroke-width="0.1">IAT</text>
<text x="96.37" y="41.80" font-size="7.45" textLength="32.26" lengthAdjust="spacingAndGlyphs" fill="#2a2a2a" stroke="#2a2a2a" stroke-width="0.1">Trims/RPM</text>
<text x="145.65" y="41.80" font-size="7.45" textLength="36.26" lengthAdjust="spacingAndGlyphs" fill="#2a2a2a" stroke="#2a2a2a" stroke-width="0.1">Mean/Mode</text>
<path d="M191.3,39.5 L192.8,42 L195.8,36.8" stroke="#2a3660" stroke-width="1.2" fill="none"/>
<text x="200.16" y="41.80" font-size="7.45" textLength="48.71" lengthAdjust="spacingAndGlyphs" fill="#2a2a2a" stroke="#2a2a2a" stroke-width="0.1">Total Correction</text>
<path d="M259.3,39.5 L260.8,42 L263.8,36.8" stroke="#2a3660" stroke-width="1.2" fill="none"/>
<text x="267.54" y="41.80" font-size="7.71" textLength="23.83" lengthAdjust="spacingAndGlyphs" fill="#2a2a2a" stroke="#2a2a2a" stroke-width="0.1">Current</text>
<path d="M301.3,39.5 L302.8,42 L305.8,36.8" stroke="#2a3660" stroke-width="1.2" fill="none"/>
<text x="309.64" y="41.80" font-size="7.45" textLength="31.33" lengthAdjust="spacingAndGlyphs" fill="#2a2a2a" stroke="#2a2a2a" stroke-width="0.1">Corrected</text>
<text x="358.70" y="41.80" font-size="7.45" textLength="30.73" lengthAdjust="spacingAndGlyphs" fill="#2a2a2a" stroke="#2a2a2a" stroke-width="0.1">Smoothed</text>
<text x="611.36" y="41.80" font-size="7.86" textLength="27.86" lengthAdjust="spacingAndGlyphs" fill="#1a1a1a" stroke="#1a1a1a" stroke-width="0.1">Compare</text>
<text x="872.49" y="41.80" font-size="7.45" textLength="35.16" lengthAdjust="spacingAndGlyphs" fill="#2a2a2a" stroke="#2a2a2a" stroke-width="0.1">Smoothing:</text>
<text x="916.21" y="41.80" font-size="6.86" textLength="4.10" lengthAdjust="spacingAndGlyphs" fill="#b0b0b0" stroke="#b0b0b0" stroke-width="0.1">3</text>
<path d="M927.8,38.6 L930,40.8 L932.2,38.6" stroke="#8a8a8a" stroke-width="1" fill="none"/>
<text x="947.70" y="41.80" font-size="7.45" textLength="17.01" lengthAdjust="spacingAndGlyphs" fill="#a8a8a8" stroke="#a8a8a8" stroke-width="0.1">Apply</text>
<text x="986.11" y="41.80" font-size="7.83" textLength="19.14" lengthAdjust="spacingAndGlyphs" fill="#1a1a1a" stroke="#1a1a1a" stroke-width="0.1">Reset</text>
<text x="50.85" y="463.42" font-size="6.29" textLength="14.51" lengthAdjust="spacingAndGlyphs" fill="#3a3a3a" stroke="#3a3a3a" stroke-width="0.12">-10</text>
<text x="60.34" y="452.00" font-size="6.29" textLength="4.98" lengthAdjust="spacingAndGlyphs" fill="#3a3a3a" stroke="#3a3a3a" stroke-width="0.12">0</text>
<text x="55.33" y="440.58" font-size="6.29" textLength="10.01" lengthAdjust="spacingAndGlyphs" fill="#3a3a3a" stroke="#3a3a3a" stroke-width="0.12">10</text>
<text x="54.51" y="429.15" font-size="6.29" textLength="10.85" lengthAdjust="spacingAndGlyphs" fill="#3a3a3a" stroke="#3a3a3a" stroke-width="0.12">20</text>
<text x="54.61" y="417.73" font-size="6.29" textLength="10.75" lengthAdjust="spacingAndGlyphs" fill="#3a3a3a" stroke="#3a3a3a" stroke-width="0.12">30</text>
<text x="54.81" y="406.30" font-size="6.29" textLength="10.54" lengthAdjust="spacingAndGlyphs" fill="#3a3a3a" stroke="#3a3a3a" stroke-width="0.12">40</text>
<text x="54.61" y="394.88" font-size="6.29" textLength="10.75" lengthAdjust="spacingAndGlyphs" fill="#3a3a3a" stroke="#3a3a3a" stroke-width="0.12">50</text>
<text x="54.51" y="383.45" font-size="6.29" textLength="10.85" lengthAdjust="spacingAndGlyphs" fill="#3a3a3a" stroke="#3a3a3a" stroke-width="0.12">60</text>
<text x="54.51" y="372.03" font-size="6.29" textLength="10.85" lengthAdjust="spacingAndGlyphs" fill="#3a3a3a" stroke="#3a3a3a" stroke-width="0.12">70</text>
<text x="54.56" y="360.61" font-size="6.29" textLength="10.80" lengthAdjust="spacingAndGlyphs" fill="#3a3a3a" stroke="#3a3a3a" stroke-width="0.12">80</text>
<text x="54.56" y="349.18" font-size="6.29" textLength="10.80" lengthAdjust="spacingAndGlyphs" fill="#3a3a3a" stroke="#3a3a3a" stroke-width="0.12">90</text>
<text x="50.32" y="337.76" font-size="6.29" textLength="15.02" lengthAdjust="spacingAndGlyphs" fill="#3a3a3a" stroke="#3a3a3a" stroke-width="0.12">100</text>
<text x="51.34" y="326.33" font-size="6.29" textLength="13.96" lengthAdjust="spacingAndGlyphs" fill="#3a3a3a" stroke="#3a3a3a" stroke-width="0.12">110</text>
<text x="50.32" y="314.91" font-size="6.29" textLength="15.02" lengthAdjust="spacingAndGlyphs" fill="#3a3a3a" stroke="#3a3a3a" stroke-width="0.12">120</text>
<text x="50.32" y="303.48" font-size="6.29" textLength="15.02" lengthAdjust="spacingAndGlyphs" fill="#3a3a3a" stroke="#3a3a3a" stroke-width="0.12">130</text>
<text x="50.32" y="292.06" font-size="6.29" textLength="15.02" lengthAdjust="spacingAndGlyphs" fill="#3a3a3a" stroke="#3a3a3a" stroke-width="0.12">140</text>
<text x="50.32" y="280.64" font-size="6.29" textLength="15.02" lengthAdjust="spacingAndGlyphs" fill="#3a3a3a" stroke="#3a3a3a" stroke-width="0.12">150</text>
<text x="50.32" y="269.21" font-size="6.29" textLength="15.02" lengthAdjust="spacingAndGlyphs" fill="#3a3a3a" stroke="#3a3a3a" stroke-width="0.12">160</text>
<text x="50.32" y="257.79" font-size="6.29" textLength="15.02" lengthAdjust="spacingAndGlyphs" fill="#3a3a3a" stroke="#3a3a3a" stroke-width="0.12">170</text>
<text x="50.32" y="246.36" font-size="6.29" textLength="15.02" lengthAdjust="spacingAndGlyphs" fill="#3a3a3a" stroke="#3a3a3a" stroke-width="0.12">180</text>
<text x="50.32" y="234.94" font-size="6.29" textLength="15.02" lengthAdjust="spacingAndGlyphs" fill="#3a3a3a" stroke="#3a3a3a" stroke-width="0.12">190</text>
<text x="49.53" y="223.52" font-size="6.29" textLength="15.84" lengthAdjust="spacingAndGlyphs" fill="#3a3a3a" stroke="#3a3a3a" stroke-width="0.12">200</text>
<text x="50.56" y="212.09" font-size="6.29" textLength="14.78" lengthAdjust="spacingAndGlyphs" fill="#3a3a3a" stroke="#3a3a3a" stroke-width="0.12">210</text>
<text x="49.53" y="200.67" font-size="6.29" textLength="15.84" lengthAdjust="spacingAndGlyphs" fill="#3a3a3a" stroke="#3a3a3a" stroke-width="0.12">220</text>
<text x="49.53" y="189.24" font-size="6.29" textLength="15.84" lengthAdjust="spacingAndGlyphs" fill="#3a3a3a" stroke="#3a3a3a" stroke-width="0.12">230</text>
<text x="49.53" y="177.82" font-size="6.29" textLength="15.84" lengthAdjust="spacingAndGlyphs" fill="#3a3a3a" stroke="#3a3a3a" stroke-width="0.12">240</text>
<text x="49.53" y="166.39" font-size="6.29" textLength="15.84" lengthAdjust="spacingAndGlyphs" fill="#3a3a3a" stroke="#3a3a3a" stroke-width="0.12">250</text>
<text x="49.53" y="154.97" font-size="6.29" textLength="15.84" lengthAdjust="spacingAndGlyphs" fill="#3a3a3a" stroke="#3a3a3a" stroke-width="0.12">260</text>
<text x="49.53" y="143.55" font-size="6.29" textLength="15.84" lengthAdjust="spacingAndGlyphs" fill="#3a3a3a" stroke="#3a3a3a" stroke-width="0.12">270</text>
<text x="49.53" y="132.12" font-size="6.29" textLength="15.84" lengthAdjust="spacingAndGlyphs" fill="#3a3a3a" stroke="#3a3a3a" stroke-width="0.12">280</text>
<text x="49.53" y="120.70" font-size="6.29" textLength="15.84" lengthAdjust="spacingAndGlyphs" fill="#3a3a3a" stroke="#3a3a3a" stroke-width="0.12">290</text>
<text x="49.62" y="109.27" font-size="6.29" textLength="15.74" lengthAdjust="spacingAndGlyphs" fill="#3a3a3a" stroke="#3a3a3a" stroke-width="0.12">300</text>
<text x="50.65" y="97.85" font-size="6.29" textLength="14.69" lengthAdjust="spacingAndGlyphs" fill="#3a3a3a" stroke="#3a3a3a" stroke-width="0.12">310</text>
<text x="49.62" y="86.42" font-size="6.29" textLength="15.74" lengthAdjust="spacingAndGlyphs" fill="#3a3a3a" stroke="#3a3a3a" stroke-width="0.12">320</text>
<text x="49.62" y="75.00" font-size="6.29" textLength="15.74" lengthAdjust="spacingAndGlyphs" fill="#3a3a3a" stroke="#3a3a3a" stroke-width="0.12">330</text>
<text x="966.53" y="74.40" font-size="6.00" textLength="17.80" lengthAdjust="spacingAndGlyphs" fill="#3a3a3a" stroke="#3a3a3a" stroke-width="0.12">0.00</text>
<text x="965.57" y="87.41" font-size="6.00" textLength="22.01" lengthAdjust="spacingAndGlyphs" fill="#3a3a3a" stroke="#3a3a3a" stroke-width="0.12">-0.25</text>
<text x="965.57" y="100.41" font-size="6.00" textLength="21.96" lengthAdjust="spacingAndGlyphs" fill="#3a3a3a" stroke="#3a3a3a" stroke-width="0.12">-0.50</text>
<text x="965.57" y="113.42" font-size="6.00" textLength="22.01" lengthAdjust="spacingAndGlyphs" fill="#3a3a3a" stroke="#3a3a3a" stroke-width="0.12">-0.75</text>
<text x="965.57" y="126.43" font-size="6.00" textLength="21.96" lengthAdjust="spacingAndGlyphs" fill="#3a3a3a" stroke="#3a3a3a" stroke-width="0.12">-1.00</text>
<text x="965.57" y="139.43" font-size="6.00" textLength="22.01" lengthAdjust="spacingAndGlyphs" fill="#3a3a3a" stroke="#3a3a3a" stroke-width="0.12">-1.25</text>
<text x="965.57" y="152.44" font-size="6.00" textLength="21.96" lengthAdjust="spacingAndGlyphs" fill="#3a3a3a" stroke="#3a3a3a" stroke-width="0.12">-1.50</text>
<text x="965.57" y="165.45" font-size="6.09" textLength="22.01" lengthAdjust="spacingAndGlyphs" fill="#3a3a3a" stroke="#3a3a3a" stroke-width="0.12">-1.75</text>
<text x="965.57" y="178.46" font-size="6.00" textLength="21.96" lengthAdjust="spacingAndGlyphs" fill="#3a3a3a" stroke="#3a3a3a" stroke-width="0.12">-2.00</text>
<text x="965.57" y="191.46" font-size="6.00" textLength="22.01" lengthAdjust="spacingAndGlyphs" fill="#3a3a3a" stroke="#3a3a3a" stroke-width="0.12">-2.25</text>
<text x="965.57" y="204.47" font-size="6.00" textLength="21.96" lengthAdjust="spacingAndGlyphs" fill="#3a3a3a" stroke="#3a3a3a" stroke-width="0.12">-2.50</text>
<text x="965.57" y="217.48" font-size="6.00" textLength="22.01" lengthAdjust="spacingAndGlyphs" fill="#3a3a3a" stroke="#3a3a3a" stroke-width="0.12">-2.75</text>
<text x="965.57" y="230.48" font-size="6.00" textLength="21.96" lengthAdjust="spacingAndGlyphs" fill="#3a3a3a" stroke="#3a3a3a" stroke-width="0.12">-3.00</text>
<text x="965.57" y="243.49" font-size="6.00" textLength="22.01" lengthAdjust="spacingAndGlyphs" fill="#3a3a3a" stroke="#3a3a3a" stroke-width="0.12">-3.25</text>
<text x="965.57" y="256.50" font-size="6.00" textLength="21.96" lengthAdjust="spacingAndGlyphs" fill="#3a3a3a" stroke="#3a3a3a" stroke-width="0.12">-3.50</text>
<text x="965.57" y="269.50" font-size="6.00" textLength="22.01" lengthAdjust="spacingAndGlyphs" fill="#3a3a3a" stroke="#3a3a3a" stroke-width="0.12">-3.75</text>
<text x="965.57" y="282.51" font-size="6.00" textLength="21.96" lengthAdjust="spacingAndGlyphs" fill="#3a3a3a" stroke="#3a3a3a" stroke-width="0.12">-4.00</text>
<text x="965.57" y="295.52" font-size="6.00" textLength="22.01" lengthAdjust="spacingAndGlyphs" fill="#3a3a3a" stroke="#3a3a3a" stroke-width="0.12">-4.25</text>
<text x="965.57" y="308.53" font-size="6.00" textLength="21.96" lengthAdjust="spacingAndGlyphs" fill="#3a3a3a" stroke="#3a3a3a" stroke-width="0.12">-4.50</text>
<text x="965.57" y="321.53" font-size="6.09" textLength="22.01" lengthAdjust="spacingAndGlyphs" fill="#3a3a3a" stroke="#3a3a3a" stroke-width="0.12">-4.75</text>
<text x="965.57" y="334.54" font-size="6.00" textLength="21.96" lengthAdjust="spacingAndGlyphs" fill="#3a3a3a" stroke="#3a3a3a" stroke-width="0.12">-5.00</text>
<text x="965.57" y="347.55" font-size="6.00" textLength="22.01" lengthAdjust="spacingAndGlyphs" fill="#3a3a3a" stroke="#3a3a3a" stroke-width="0.12">-5.25</text>
<text x="965.57" y="360.55" font-size="6.00" textLength="21.96" lengthAdjust="spacingAndGlyphs" fill="#3a3a3a" stroke="#3a3a3a" stroke-width="0.12">-5.50</text>
<text x="965.57" y="373.56" font-size="6.09" textLength="22.01" lengthAdjust="spacingAndGlyphs" fill="#3a3a3a" stroke="#3a3a3a" stroke-width="0.12">-5.75</text>
<text x="965.57" y="386.57" font-size="6.00" textLength="21.96" lengthAdjust="spacingAndGlyphs" fill="#3a3a3a" stroke="#3a3a3a" stroke-width="0.12">-6.00</text>
<text x="965.57" y="399.58" font-size="6.00" textLength="22.01" lengthAdjust="spacingAndGlyphs" fill="#3a3a3a" stroke="#3a3a3a" stroke-width="0.12">-6.25</text>
<text x="965.57" y="412.58" font-size="6.00" textLength="21.96" lengthAdjust="spacingAndGlyphs" fill="#3a3a3a" stroke="#3a3a3a" stroke-width="0.12">-6.50</text>
<text x="965.57" y="425.59" font-size="6.00" textLength="22.01" lengthAdjust="spacingAndGlyphs" fill="#3a3a3a" stroke="#3a3a3a" stroke-width="0.12">-6.75</text>
<text x="965.57" y="438.60" font-size="6.00" textLength="21.96" lengthAdjust="spacingAndGlyphs" fill="#3a3a3a" stroke="#3a3a3a" stroke-width="0.12">-7.00</text>
<text x="965.57" y="451.60" font-size="6.00" textLength="22.01" lengthAdjust="spacingAndGlyphs" fill="#3a3a3a" stroke="#3a3a3a" stroke-width="0.12">-7.25</text>
<text x="965.57" y="464.61" font-size="6.00" textLength="21.96" lengthAdjust="spacingAndGlyphs" fill="#3a3a3a" stroke="#3a3a3a" stroke-width="0.12">-7.50</text>
<text x="76.33" y="475.90" font-size="6.86" textLength="18.05" lengthAdjust="spacingAndGlyphs" fill="#3a3a3a" stroke="#3a3a3a" stroke-width="0.12">0.75</text>
<text x="125.62" y="475.90" font-size="6.86" textLength="16.12" lengthAdjust="spacingAndGlyphs" fill="#3a3a3a" stroke="#3a3a3a" stroke-width="0.12">1.00</text>
<text x="173.56" y="475.90" font-size="6.86" textLength="16.17" lengthAdjust="spacingAndGlyphs" fill="#3a3a3a" stroke="#3a3a3a" stroke-width="0.12">1.25</text>
<text x="221.50" y="475.90" font-size="6.86" textLength="16.12" lengthAdjust="spacingAndGlyphs" fill="#3a3a3a" stroke="#3a3a3a" stroke-width="0.12">1.50</text>
<text x="269.44" y="475.90" font-size="6.96" textLength="16.17" lengthAdjust="spacingAndGlyphs" fill="#3a3a3a" stroke="#3a3a3a" stroke-width="0.12">1.75</text>
<text x="315.93" y="475.90" font-size="6.86" textLength="18.10" lengthAdjust="spacingAndGlyphs" fill="#3a3a3a" stroke="#3a3a3a" stroke-width="0.12">2.00</text>
<text x="363.87" y="475.90" font-size="6.86" textLength="18.15" lengthAdjust="spacingAndGlyphs" fill="#3a3a3a" stroke="#3a3a3a" stroke-width="0.12">2.25</text>
<text x="411.81" y="475.90" font-size="6.86" textLength="18.10" lengthAdjust="spacingAndGlyphs" fill="#3a3a3a" stroke="#3a3a3a" stroke-width="0.12">2.50</text>
<text x="459.75" y="475.90" font-size="6.86" textLength="18.15" lengthAdjust="spacingAndGlyphs" fill="#3a3a3a" stroke="#3a3a3a" stroke-width="0.12">2.75</text>
<text x="507.79" y="475.90" font-size="6.86" textLength="18.01" lengthAdjust="spacingAndGlyphs" fill="#3a3a3a" stroke="#3a3a3a" stroke-width="0.12">3.00</text>
<text x="555.73" y="475.90" font-size="6.86" textLength="18.05" lengthAdjust="spacingAndGlyphs" fill="#3a3a3a" stroke="#3a3a3a" stroke-width="0.12">3.25</text>
<text x="603.67" y="475.90" font-size="6.86" textLength="18.01" lengthAdjust="spacingAndGlyphs" fill="#3a3a3a" stroke="#3a3a3a" stroke-width="0.12">3.50</text>
<text x="651.61" y="475.90" font-size="6.86" textLength="18.05" lengthAdjust="spacingAndGlyphs" fill="#3a3a3a" stroke="#3a3a3a" stroke-width="0.12">3.75</text>
<text x="699.74" y="475.90" font-size="6.86" textLength="17.82" lengthAdjust="spacingAndGlyphs" fill="#3a3a3a" stroke="#3a3a3a" stroke-width="0.12">4.00</text>
<text x="747.68" y="475.90" font-size="6.86" textLength="17.86" lengthAdjust="spacingAndGlyphs" fill="#3a3a3a" stroke="#3a3a3a" stroke-width="0.12">4.25</text>
<text x="795.62" y="475.90" font-size="6.86" textLength="17.82" lengthAdjust="spacingAndGlyphs" fill="#3a3a3a" stroke="#3a3a3a" stroke-width="0.12">4.50</text>
<text x="843.56" y="475.90" font-size="6.96" textLength="17.86" lengthAdjust="spacingAndGlyphs" fill="#3a3a3a" stroke="#3a3a3a" stroke-width="0.12">4.75</text>
<text x="891.31" y="475.90" font-size="6.86" textLength="18.01" lengthAdjust="spacingAndGlyphs" fill="#3a3a3a" stroke="#3a3a3a" stroke-width="0.12">5.00</text>
<text x="939.25" y="475.90" font-size="6.86" textLength="18.05" lengthAdjust="spacingAndGlyphs" fill="#3a3a3a" stroke="#3a3a3a" stroke-width="0.12">5.25</text>
<text x="459.19" y="486.70" font-size="8.14" textLength="113.22" lengthAdjust="spacingAndGlyphs" fill="#262626" font-weight="bold">MAF Sensor (Voltage)</text>
<text transform="translate(41.50,296.44) rotate(-90)" x="0" y="0" font-size="10.62" textLength="62.96" lengthAdjust="spacingAndGlyphs" fill="#1e1e1e" stroke="#1e1e1e" stroke-width="0.3">Mass Airflow (g/s)</text>
<text transform="translate(994.30,231.84) rotate(90)" x="0" y="0" font-size="9.93" textLength="69.14" lengthAdjust="spacingAndGlyphs" fill="#1e1e1e" stroke="#1e1e1e" stroke-width="0.3">Total Correction (%)</text>
<text x="446.08" y="60.00" font-size="5.93" textLength="43.03" lengthAdjust="spacingAndGlyphs" fill="#4a4a4a" stroke="#4a4a4a" stroke-width="0.05">Smoothed</text>
<text x="512.72" y="60.00" font-size="5.93" textLength="42.01" lengthAdjust="spacingAndGlyphs" fill="#4a4a4a" stroke="#4a4a4a" stroke-width="0.05">Corrected</text>
<text x="577.43" y="60.00" font-size="6.14" textLength="31.06" lengthAdjust="spacingAndGlyphs" fill="#4a4a4a" stroke="#4a4a4a" stroke-width="0.05">Current</text>
<text x="33.50" y="503.90" font-size="7.71" textLength="14.78" lengthAdjust="spacingAndGlyphs" fill="#1a1a1a" stroke="#1a1a1a" stroke-width="0.15">0.90</text>
<text x="33.50" y="513.80" font-size="7.86" textLength="14.82" lengthAdjust="spacingAndGlyphs" fill="#1a1a1a" stroke="#1a1a1a" stroke-width="0.15">0.85</text>
<text x="65.50" y="503.90" font-size="7.71" textLength="14.74" lengthAdjust="spacingAndGlyphs" fill="#1a1a1a" stroke="#1a1a1a" stroke-width="0.15">0.94</text>
<text x="65.50" y="513.80" font-size="7.86" textLength="14.82" lengthAdjust="spacingAndGlyphs" fill="#1a1a1a" stroke="#1a1a1a" stroke-width="0.15">0.95</text>
<text x="97.50" y="503.90" font-size="7.71" textLength="14.82" lengthAdjust="spacingAndGlyphs" fill="#1a1a1a" stroke="#1a1a1a" stroke-width="0.15">0.98</text>
<text x="98.68" y="513.80" font-size="7.86" textLength="13.58" lengthAdjust="spacingAndGlyphs" fill="#1a1a1a" stroke="#1a1a1a" stroke-width="0.15">1.10</text>
<text x="129.94" y="503.90" font-size="7.71" textLength="14.44" lengthAdjust="spacingAndGlyphs" fill="#1a1a1a" stroke="#1a1a1a" stroke-width="0.15">1.02</text>
<text x="129.95" y="513.80" font-size="7.86" textLength="14.36" lengthAdjust="spacingAndGlyphs" fill="#1a1a1a" stroke="#1a1a1a" stroke-width="0.15">1.35</text>
<text x="161.95" y="503.90" font-size="7.71" textLength="14.36" lengthAdjust="spacingAndGlyphs" fill="#1a1a1a" stroke="#1a1a1a" stroke-width="0.15">1.05</text>
<text x="161.95" y="513.80" font-size="7.86" textLength="14.32" lengthAdjust="spacingAndGlyphs" fill="#1a1a1a" stroke="#1a1a1a" stroke-width="0.15">1.50</text>
<text x="193.95" y="503.90" font-size="7.71" textLength="14.40" lengthAdjust="spacingAndGlyphs" fill="#1a1a1a" stroke="#1a1a1a" stroke-width="0.15">1.09</text>
<text x="193.94" y="513.80" font-size="7.86" textLength="14.44" lengthAdjust="spacingAndGlyphs" fill="#1a1a1a" stroke="#1a1a1a" stroke-width="0.15">1.72</text>
<text x="226.68" y="503.90" font-size="7.71" textLength="13.61" lengthAdjust="spacingAndGlyphs" fill="#1a1a1a" stroke="#1a1a1a" stroke-width="0.15">1.13</text>
<text x="226.67" y="513.80" font-size="7.86" textLength="13.65" lengthAdjust="spacingAndGlyphs" fill="#1a1a1a" stroke="#1a1a1a" stroke-width="0.15">1.91</text>
<text x="258.67" y="503.90" font-size="7.83" textLength="13.69" lengthAdjust="spacingAndGlyphs" fill="#1a1a1a" stroke="#1a1a1a" stroke-width="0.15">1.17</text>
<text x="258.13" y="513.80" font-size="7.86" textLength="14.24" lengthAdjust="spacingAndGlyphs" fill="#1a1a1a" stroke="#1a1a1a" stroke-width="0.15">2.17</text>
<text x="290.67" y="503.90" font-size="7.71" textLength="13.65" lengthAdjust="spacingAndGlyphs" fill="#e8f0ff" stroke="#e8f0ff" stroke-width="0.15">1.21</text>
<text x="289.42" y="513.80" font-size="7.86" textLength="14.90" lengthAdjust="spacingAndGlyphs" fill="#1a1a1a" stroke="#1a1a1a" stroke-width="0.15">2.43</text>
<text x="321.95" y="503.90" font-size="7.71" textLength="14.36" lengthAdjust="spacingAndGlyphs" fill="#1a1a1a" stroke="#1a1a1a" stroke-width="0.15">1.25</text>
<text x="321.42" y="513.80" font-size="7.86" textLength="14.86" lengthAdjust="spacingAndGlyphs" fill="#1a1a1a" stroke="#1a1a1a" stroke-width="0.15">2.70</text>
<text x="353.95" y="503.90" font-size="7.71" textLength="14.40" lengthAdjust="spacingAndGlyphs" fill="#1a1a1a" stroke="#1a1a1a" stroke-width="0.15">1.29</text>
<text x="353.42" y="513.80" font-size="7.86" textLength="14.82" lengthAdjust="spacingAndGlyphs" fill="#1a1a1a" stroke="#1a1a1a" stroke-width="0.15">2.94</text>
<text x="385.95" y="503.90" font-size="7.71" textLength="14.36" lengthAdjust="spacingAndGlyphs" fill="#1a1a1a" stroke="#1a1a1a" stroke-width="0.15">1.33</text>
<text x="385.50" y="513.80" font-size="7.86" textLength="14.82" lengthAdjust="spacingAndGlyphs" fill="#1a1a1a" stroke="#1a1a1a" stroke-width="0.15">3.25</text>
<text x="417.94" y="503.90" font-size="7.71" textLength="14.44" lengthAdjust="spacingAndGlyphs" fill="#1a1a1a" stroke="#1a1a1a" stroke-width="0.15">1.37</text>
<text x="417.50" y="513.80" font-size="7.86" textLength="14.78" lengthAdjust="spacingAndGlyphs" fill="#1a1a1a" stroke="#1a1a1a" stroke-width="0.15">3.50</text>
<text x="450.67" y="503.90" font-size="7.83" textLength="13.65" lengthAdjust="spacingAndGlyphs" fill="#1a1a1a" stroke="#1a1a1a" stroke-width="0.15">1.41</text>
<text x="450.21" y="513.80" font-size="7.86" textLength="14.13" lengthAdjust="spacingAndGlyphs" fill="#1a1a1a" stroke="#1a1a1a" stroke-width="0.15">3.91</text>
<text x="481.95" y="503.90" font-size="7.83" textLength="14.36" lengthAdjust="spacingAndGlyphs" fill="#1a1a1a" stroke="#1a1a1a" stroke-width="0.15">1.45</text>
<text x="481.65" y="513.80" font-size="7.86" textLength="14.74" lengthAdjust="spacingAndGlyphs" fill="#1a1a1a" stroke="#1a1a1a" stroke-width="0.15">4.42</text>
<text x="513.95" y="503.90" font-size="7.71" textLength="14.36" lengthAdjust="spacingAndGlyphs" fill="#1a1a1a" stroke="#1a1a1a" stroke-width="0.15">1.48</text>
<text x="513.65" y="513.80" font-size="7.86" textLength="14.66" lengthAdjust="spacingAndGlyphs" fill="#1a1a1a" stroke="#1a1a1a" stroke-width="0.15">4.96</text>
<text x="545.94" y="503.90" font-size="7.71" textLength="14.44" lengthAdjust="spacingAndGlyphs" fill="#1a1a1a" stroke="#1a1a1a" stroke-width="0.15">1.52</text>
<text x="545.50" y="513.80" font-size="7.97" textLength="14.74" lengthAdjust="spacingAndGlyphs" fill="#1a1a1a" stroke="#1a1a1a" stroke-width="0.15">5.44</text>
<text x="577.95" y="503.90" font-size="7.71" textLength="14.36" lengthAdjust="spacingAndGlyphs" fill="#1a1a1a" stroke="#1a1a1a" stroke-width="0.15">1.56</text>
<text x="577.50" y="513.80" font-size="7.86" textLength="14.82" lengthAdjust="spacingAndGlyphs" fill="#1a1a1a" stroke="#1a1a1a" stroke-width="0.15">5.85</text>
<text x="609.95" y="503.90" font-size="7.71" textLength="14.32" lengthAdjust="spacingAndGlyphs" fill="#1a1a1a" stroke="#1a1a1a" stroke-width="0.15">1.60</text>
<text x="609.42" y="513.80" font-size="7.86" textLength="14.90" lengthAdjust="spacingAndGlyphs" fill="#1a1a1a" stroke="#1a1a1a" stroke-width="0.15">6.53</text>
<text x="641.95" y="503.90" font-size="7.71" textLength="14.28" lengthAdjust="spacingAndGlyphs" fill="#1a1a1a" stroke="#1a1a1a" stroke-width="0.15">1.64</text>
<text x="641.42" y="513.80" font-size="7.86" textLength="14.90" lengthAdjust="spacingAndGlyphs" fill="#1a1a1a" stroke="#1a1a1a" stroke-width="0.15">7.06</text>
<text x="673.95" y="503.90" font-size="7.71" textLength="14.36" lengthAdjust="spacingAndGlyphs" fill="#1a1a1a" stroke="#1a1a1a" stroke-width="0.15">1.68</text>
<text x="673.42" y="513.80" font-size="7.86" textLength="14.86" lengthAdjust="spacingAndGlyphs" fill="#1a1a1a" stroke="#1a1a1a" stroke-width="0.15">7.60</text>
<text x="705.94" y="503.90" font-size="7.71" textLength="14.44" lengthAdjust="spacingAndGlyphs" fill="#1a1a1a" stroke="#1a1a1a" stroke-width="0.15">1.72</text>
<text x="705.46" y="513.80" font-size="7.86" textLength="14.90" lengthAdjust="spacingAndGlyphs" fill="#1a1a1a" stroke="#1a1a1a" stroke-width="0.15">8.39</text>
<text x="737.95" y="503.90" font-size="7.71" textLength="14.36" lengthAdjust="spacingAndGlyphs" fill="#1a1a1a" stroke="#1a1a1a" stroke-width="0.15">1.76</text>
<text x="737.46" y="513.80" font-size="7.86" textLength="14.86" lengthAdjust="spacingAndGlyphs" fill="#1a1a1a" stroke="#1a1a1a" stroke-width="0.15">9.05</text>
<text x="769.95" y="503.90" font-size="7.71" textLength="14.32" lengthAdjust="spacingAndGlyphs" fill="#1a1a1a" stroke="#1a1a1a" stroke-width="0.15">1.80</text>
<text x="769.46" y="513.80" font-size="7.86" textLength="14.78" lengthAdjust="spacingAndGlyphs" fill="#1a1a1a" stroke="#1a1a1a" stroke-width="0.15">9.74</text>
<text x="801.95" y="503.90" font-size="7.71" textLength="14.28" lengthAdjust="spacingAndGlyphs" fill="#1a1a1a" stroke="#1a1a1a" stroke-width="0.15">1.84</text>
<text x="797.95" y="513.80" font-size="7.86" textLength="18.36" lengthAdjust="spacingAndGlyphs" fill="#1a1a1a" stroke="#1a1a1a" stroke-width="0.15">10.36</text>
<text x="833.95" y="503.90" font-size="7.71" textLength="14.36" lengthAdjust="spacingAndGlyphs" fill="#1a1a1a" stroke="#1a1a1a" stroke-width="0.15">1.88</text>
<text x="830.65" y="513.80" font-size="7.86" textLength="17.74" lengthAdjust="spacingAndGlyphs" fill="#1a1a1a" stroke="#1a1a1a" stroke-width="0.15">11.02</text>
<text x="866.67" y="503.90" font-size="7.71" textLength="13.65" lengthAdjust="spacingAndGlyphs" fill="#1a1a1a" stroke="#1a1a1a" stroke-width="0.15">1.91</text>
<text x="862.65" y="513.80" font-size="7.86" textLength="17.66" lengthAdjust="spacingAndGlyphs" fill="#1a1a1a" stroke="#1a1a1a" stroke-width="0.15">11.93</text>
<text x="897.95" y="503.90" font-size="7.71" textLength="14.36" lengthAdjust="spacingAndGlyphs" fill="#1a1a1a" stroke="#1a1a1a" stroke-width="0.15">1.95</text>
<text x="893.95" y="513.80" font-size="7.86" textLength="18.36" lengthAdjust="spacingAndGlyphs" fill="#1a1a1a" stroke="#1a1a1a" stroke-width="0.15">12.98</text>
<text x="929.95" y="503.90" font-size="7.71" textLength="14.40" lengthAdjust="spacingAndGlyphs" fill="#1a1a1a" stroke="#1a1a1a" stroke-width="0.15">1.99</text>
<text x="925.95" y="513.80" font-size="7.86" textLength="18.29" lengthAdjust="spacingAndGlyphs" fill="#1a1a1a" stroke="#1a1a1a" stroke-width="0.15">13.74</text>
<text x="961.42" y="503.90" font-size="7.71" textLength="14.90" lengthAdjust="spacingAndGlyphs" fill="#1a1a1a" stroke="#1a1a1a" stroke-width="0.15">2.03</text>
<text x="957.95" y="513.80" font-size="7.86" textLength="18.36" lengthAdjust="spacingAndGlyphs" fill="#1a1a1a" stroke="#1a1a1a" stroke-width="0.15">14.58</text>
<text x="993.42" y="503.90" font-size="7.71" textLength="14.98" lengthAdjust="spacingAndGlyphs" fill="#1a1a1a" stroke="#1a1a1a" stroke-width="0.15">2.07</text>
<text x="989.95" y="513.80" font-size="7.97" textLength="18.29" lengthAdjust="spacingAndGlyphs" fill="#1a1a1a" stroke="#1a1a1a" stroke-width="0.15">15.44</text>
<path d="M25,520.5 L22.5,523 L25,525.5 Z" fill="#333"/>
<path d="M1012.5,520.5 L1015,523 L1012.5,525.5 Z" fill="#333"/>
<text x="309.40" y="524.20" font-size="4.69" textLength="5.20" lengthAdjust="spacingAndGlyphs" fill="#666" stroke="#666" stroke-width="0.1">|||</text>
<text x="58.77" y="569.00" font-size="8.14" textLength="72.41" lengthAdjust="spacingAndGlyphs" fill="#ececec" stroke="#ececec" stroke-width="0.2">Scion FR-S Forum | ...</text>
<text x="161.91" y="569.00" font-size="8.14" textLength="68.98" lengthAdjust="spacingAndGlyphs" fill="#ececec" stroke="#ececec" stroke-width="0.2">MAF Scaling - v1.5.2</text>
<text x="263.12" y="569.00" font-size="8.14" textLength="71.55" lengthAdjust="spacingAndGlyphs" fill="#ececec" stroke="#ececec" stroke-width="0.2">RomRaider v0.5.7 R...</text>
<text x="365.87" y="569.00" font-size="8.14" textLength="74.85" lengthAdjust="spacingAndGlyphs" fill="#ececec" stroke="#ececec" stroke-width="0.2">MAF Compare / Mo...</text>
<text x="468.16" y="569.00" font-size="8.14" textLength="74.55" lengthAdjust="spacingAndGlyphs" fill="#ececec" stroke="#ececec" stroke-width="0.2">OpenFlash Manager...</text>
<text x="899.60" y="548.40" font-size="6.67" textLength="10.43" lengthAdjust="spacingAndGlyphs" fill="#d0d0d0" stroke="#d0d0d0" stroke-width="0.2">EN</text>
<text x="917.24" y="548.50" font-size="7.86" textLength="3.59" lengthAdjust="spacingAndGlyphs" fill="#fff" stroke="#fff" stroke-width="0.1" font-weight="bold">?</text>
<text x="981.26" y="545.10" font-size="7.43" textLength="28.38" lengthAdjust="spacingAndGlyphs" fill="#e8e8e8" stroke="#e8e8e8" stroke-width="0.2">9:57 PM</text>
<text x="976.96" y="559.50" font-size="7.17" textLength="38.72" lengthAdjust="spacingAndGlyphs" fill="#e8e8e8" stroke="#e8e8e8" stroke-width="0.2">Wednesday</text>
<text x="978.62" y="573.30" font-size="8.14" textLength="33.60" lengthAdjust="spacingAndGlyphs" fill="#e8e8e8" stroke="#e8e8e8" stroke-width="0.2">6/25/2014</text></svg>
</body></html>
